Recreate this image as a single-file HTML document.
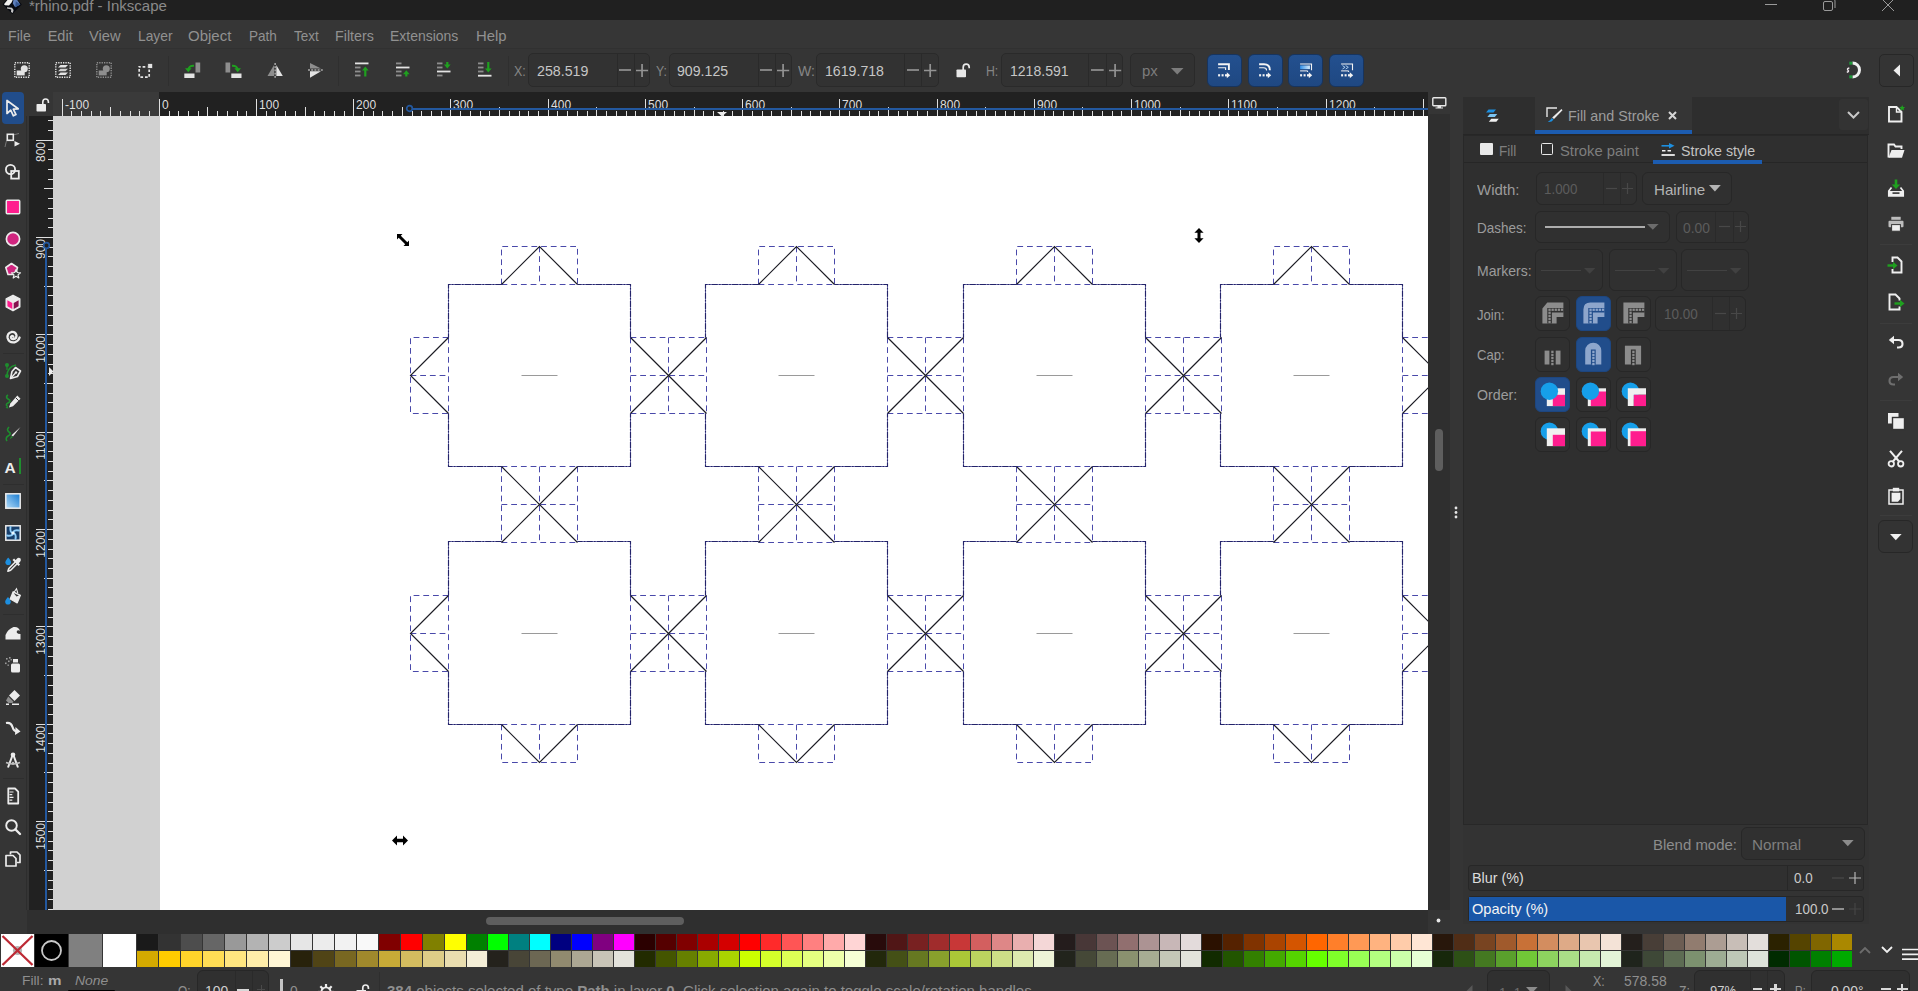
<!DOCTYPE html>
<html lang="en"><head><meta charset="utf-8"><title>*rhino.pdf - Inkscape</title>
<style>
html,body{margin:0;padding:0;background:#353535;}
body{width:1918px;height:991px;overflow:hidden;position:relative;font-family:"Liberation Sans",sans-serif;}
#app{position:absolute;left:0;top:0;width:1918px;height:991px;overflow:hidden;background:#353535;}
#app div,#app svg,#app span{position:absolute;box-sizing:border-box;}
.t{white-space:nowrap;transform-origin:0 50%;}
svg{overflow:visible;}
.palrow i{position:absolute;top:0;height:100%;display:block;}
</style></head>
<body><div id="app">
<div class="titlebar" style="left:0px;top:0px;width:1918px;height:20px;background:#202020;"></div>
<span id="t1" class="t" style="left:29.3px;top:-1px;font-size:14px;line-height:14px;color:#8a8a8a;transform:scaleX(1.0742);">*rhino.pdf - Inkscape</span>
<svg style="left:0px;top:0px;" width="24" height="16" viewBox="0 0 24 16"><path d="M2.5 4.2 L7.5 -1 H17 L21.8 4.6 L12.3 14 Z" fill="#070a10"/><path d="M4 4.3 L8.2 -1 H13.2 L11.5 2.5 L9 5.6 L5 5.2Z" fill="#f2f2f0"/><path d="M13.6 -1 H16.6 L20.3 4.5 L15.2 7.2 L12.8 3.6Z" fill="#5f80bb"/><path d="M15.8 1.2 L20.3 4.5 L15.2 7.2Z" fill="#34558f"/><path d="M7 7.3 L12 7.7 L13.6 10 L12.8 12.9 L11 12 L11.2 9.6 L7 8.6Z" fill="#c4c4c4"/></svg>
<svg style="left:1760px;top:0px;" width="150" height="14" viewBox="0 0 150 14"><path d="M5 4.5 H17" stroke="#9a9a9a" stroke-width="1"/><rect x="63.5" y="1.5" width="9" height="9" rx="1.5" fill="none" stroke="#9a9a9a"/><path d="M66 -1 H73.5 Q75 -1 75 1 V8" fill="none" stroke="#9a9a9a"/><path d="M122 -1 L134 11 M134 -1 L122 11" stroke="#9a9a9a" stroke-width="1"/></svg>
<div class="menubar" style="left:0px;top:20px;width:1918px;height:29px;background:#363636;"></div>
<span id="t2" class="t" style="left:8.3px;top:29px;font-size:14.5px;line-height:14.5px;color:#919191;transform:scaleX(0.9739);">File</span>
<span id="t3" class="t" style="left:47.7px;top:29px;font-size:14.5px;line-height:14.5px;color:#919191;transform:scaleX(1.0000);">Edit</span>
<span id="t4" class="t" style="left:89.4px;top:29px;font-size:14.5px;line-height:14.5px;color:#919191;transform:scaleX(1.0129);">View</span>
<span id="t5" class="t" style="left:137.5px;top:29px;font-size:14.5px;line-height:14.5px;color:#919191;transform:scaleX(0.9528);">Layer</span>
<span id="t6" class="t" style="left:188.2px;top:29px;font-size:14.5px;line-height:14.5px;color:#919191;transform:scaleX(1.0333);">Object</span>
<span id="t7" class="t" style="left:248.6px;top:29px;font-size:14.5px;line-height:14.5px;color:#919191;transform:scaleX(0.9333);">Path</span>
<span id="t8" class="t" style="left:293.6px;top:29px;font-size:14.5px;line-height:14.5px;color:#919191;transform:scaleX(0.9296);">Text</span>
<span id="t9" class="t" style="left:335.3px;top:29px;font-size:14.5px;line-height:14.5px;color:#919191;transform:scaleX(0.9846);">Filters</span>
<span id="t10" class="t" style="left:390.4px;top:29px;font-size:14.5px;line-height:14.5px;color:#919191;transform:scaleX(0.9634);">Extensions</span>
<span id="t11" class="t" style="left:475.5px;top:29px;font-size:14.5px;line-height:14.5px;color:#919191;transform:scaleX(1.0233);">Help</span>
<div style="left:0px;top:48px;width:1918px;height:1px;background:#313131;"></div>
<div class="toolbar" style="left:0px;top:49px;width:1918px;height:44px;background:#353535;"></div>
<svg style="left:13.5px;top:61.5px;" width="16" height="16" viewBox="0 0 16 16"><rect x="0.8" y="0.8" width="14.4" height="14.4" fill="none" stroke="#e4e4e4" stroke-width="1.4" stroke-dasharray="1.3 1.1"/><rect x="2.7" y="8.5" width="8" height="4.9" fill="#e4e4e4"/><circle cx="10.3" cy="6.8" r="3.5" fill="#e4e4e4"/></svg>
<svg style="left:54.5px;top:61.5px;" width="16" height="16" viewBox="0 0 16 16"><rect x="0.8" y="0.8" width="14.4" height="14.4" fill="none" stroke="#e4e4e4" stroke-width="1.4" stroke-dasharray="1.3 1.1"/><path d="M5.5 3 H13 L10.5 5.6 H3Z" fill="#e4e4e4"/><path d="M5.5 6.7 H13 L10.5 9.3 H3Z" fill="#d0d0d0"/><path d="M5.5 10.4 H13 L10.5 13.0 H3Z" fill="#e4e4e4"/></svg>
<svg style="left:95.7px;top:61.5px;" width="16" height="16" viewBox="0 0 16 16"><rect x="0.8" y="0.8" width="14.4" height="14.4" fill="none" stroke="#8e8e8e" stroke-width="1.4" stroke-dasharray="1.3 1.1"/><rect x="2.7" y="8.5" width="8" height="4.9" fill="#8e8e8e"/><circle cx="10.3" cy="6.8" r="3.5" fill="#8e8e8e"/></svg>
<svg style="left:137.5px;top:61.5px;" width="16" height="16" viewBox="0 0 16 16"><rect x="1.2" y="4.8" width="10" height="10.3" fill="none" stroke="#e4e4e4" stroke-width="1.7" stroke-dasharray="2.7 1.9" stroke-dashoffset="1.2"/><rect x="9.7" y="1.4" width="5" height="5" fill="#e4e4e4" stroke="#353535" stroke-width="0.8"/></svg>
<div style="left:168px;top:56px;width:1px;height:30px;background:#2f2f2f;"></div>
<svg style="left:183.5px;top:61.5px;" width="17" height="16" viewBox="0 0 17 16"><rect x="11.5" y="0.5" width="4.7" height="10" fill="#8e8e8e"/><rect x="0.3" y="11.5" width="10.2" height="4.5" fill="#e4e4e4"/><path d="M10 3.8 Q4.5 3.5 4.3 8" fill="none" stroke="#1fa01f" stroke-width="2"/><path d="M1 6.3 L7.6 6.3 L4.3 10.2Z" fill="#1fa01f"/></svg>
<svg style="left:224.5px;top:61.5px;" width="17" height="16" viewBox="0 0 17 16"><rect x="0.5" y="0.5" width="4.7" height="10" fill="#8e8e8e"/><rect x="6.3" y="11.5" width="10.2" height="4.5" fill="#e4e4e4"/><path d="M7 3.8 Q12.5 3.5 12.7 8" fill="none" stroke="#1fa01f" stroke-width="2"/><path d="M16 6.3 L9.4 6.3 L12.7 10.2Z" fill="#1fa01f"/></svg>
<svg style="left:266.5px;top:61.5px;" width="16" height="16" viewBox="0 0 16 16"><path d="M7 3 V14 H0.5Z" fill="#8e8e8e"/><path d="M9.3 3 V14 H15.8Z" fill="#e4e4e4"/><path d="M8.1 1 V16" stroke="#e4e4e4" stroke-width="1" stroke-dasharray="2 1.2"/></svg>
<svg style="left:308px;top:61.5px;" width="16" height="16" viewBox="0 0 16 16"><path d="M2 6.5 H13 L2 1Z" fill="#8e8e8e"/><path d="M2 9.3 H13 L2 15.8Z" fill="#e4e4e4"/><path d="M0 8 H15" stroke="#e4e4e4" stroke-width="1" stroke-dasharray="2 1.2"/></svg>
<div style="left:338px;top:56px;width:1px;height:30px;background:#2f2f2f;"></div>
<svg style="left:354.5px;top:62px;" width="14" height="15" viewBox="0 0 14 15"><rect x="0" y="0.5" width="13.5" height="1.8" fill="#e4e4e4"/><rect x="0" y="4.6" width="5.5" height="1.8" fill="#8e8e8e"/><rect x="0" y="8.6" width="5.5" height="1.8" fill="#8e8e8e"/><rect x="0" y="12.6" width="5.5" height="1.8" fill="#8e8e8e"/><path d="M10.3 7.5 V14.5" stroke="#1fa01f" stroke-width="2.2"/><path d="M7.000000000000001 8.5 L10.3 4.5 L13.600000000000001 8.5Z" fill="#1fa01f"/></svg>
<svg style="left:395.8px;top:62px;" width="14" height="15" viewBox="0 0 14 15"><rect x="0" y="0.5" width="5.5" height="1.8" fill="#8e8e8e"/><rect x="0" y="4.6" width="13.5" height="1.8" fill="#e4e4e4"/><rect x="0" y="8.6" width="5.5" height="1.8" fill="#8e8e8e"/><rect x="0" y="12.6" width="5.5" height="1.8" fill="#8e8e8e"/><path d="M10.3 11.2 V14.5" stroke="#1fa01f" stroke-width="2.2"/><path d="M7.000000000000001 12.2 L10.3 8.2 L13.600000000000001 12.2Z" fill="#1fa01f"/></svg>
<svg style="left:436.8px;top:62px;" width="14" height="15" viewBox="0 0 14 15"><rect x="0" y="0.5" width="5.5" height="1.8" fill="#8e8e8e"/><rect x="0" y="4.6" width="5.5" height="1.8" fill="#8e8e8e"/><rect x="0" y="8.6" width="13.5" height="1.8" fill="#e4e4e4"/><rect x="0" y="12.6" width="5.5" height="1.8" fill="#8e8e8e"/><path d="M10.3 0 V3.5" stroke="#1fa01f" stroke-width="2.2"/><path d="M7.000000000000001 2.5 L10.3 6.5 L13.600000000000001 2.5Z" fill="#1fa01f"/></svg>
<svg style="left:478px;top:62px;" width="14" height="15" viewBox="0 0 14 15"><rect x="0" y="0.5" width="5.5" height="1.8" fill="#8e8e8e"/><rect x="0" y="4.6" width="5.5" height="1.8" fill="#8e8e8e"/><rect x="0" y="8.6" width="5.5" height="1.8" fill="#8e8e8e"/><rect x="0" y="12.8" width="13.5" height="1.8" fill="#e4e4e4"/><path d="M10.3 0 V7.5" stroke="#1fa01f" stroke-width="2.2"/><path d="M7.000000000000001 6.5 L10.3 10.5 L13.600000000000001 6.5Z" fill="#1fa01f"/></svg>
<div style="left:508px;top:56px;width:1px;height:30px;background:#2f2f2f;"></div>
<span id="t12" class="t" style="left:514px;top:64px;font-size:14.5px;line-height:14.5px;color:#858585;transform:scaleX(0.8571);">X:</span>
<div style="left:528.3px;top:53.4px;width:122.20000000000005px;height:33.6px;background:#323232;border:1px solid #2a2a2a;border-radius:5px;"></div>
<div style="left:616.6px;top:54.4px;width:1px;height:31.6px;background:#2a2a2a;"></div>
<div style="left:633.8px;top:54.4px;width:1px;height:31.6px;background:#2a2a2a;"></div>
<span id="t13" class="t" style="left:536.5px;top:64px;font-size:14.5px;line-height:14.5px;color:#c6c6c6;transform:scaleX(0.9808);">258.519</span>
<svg style="left:619px;top:64.2px;" width="12" height="12" viewBox="0 0 12 12"><path d="M0 6 H12" stroke="#939393" stroke-width="1.7"/></svg>
<svg style="left:636.4px;top:63.7px;" width="12.100000000000023" height="13" viewBox="0 0 12.100000000000023 13"><path d="M0 6.5 H12.100000000000023 M6.050000000000011 0 V13" stroke="#939393" stroke-width="1.7"/></svg>
<span id="t14" class="t" style="left:656px;top:64px;font-size:14.5px;line-height:14.5px;color:#858585;transform:scaleX(0.8462);">Y:</span>
<div style="left:669.4px;top:53.4px;width:122.39999999999998px;height:33.6px;background:#323232;border:1px solid #2a2a2a;border-radius:5px;"></div>
<div style="left:757.5px;top:54.4px;width:1px;height:31.6px;background:#2a2a2a;"></div>
<div style="left:774.5px;top:54.4px;width:1px;height:31.6px;background:#2a2a2a;"></div>
<span id="t15" class="t" style="left:676.7px;top:64px;font-size:14.5px;line-height:14.5px;color:#c6c6c6;transform:scaleX(0.9750);">909.125</span>
<svg style="left:760px;top:64.2px;" width="12" height="12" viewBox="0 0 12 12"><path d="M0 6 H12" stroke="#939393" stroke-width="1.7"/></svg>
<svg style="left:776.8px;top:63.7px;" width="12.200000000000045" height="13" viewBox="0 0 12.200000000000045 13"><path d="M0 6.5 H12.200000000000045 M6.100000000000023 0 V13" stroke="#939393" stroke-width="1.7"/></svg>
<span id="t16" class="t" style="left:797.5px;top:64px;font-size:14.5px;line-height:14.5px;color:#858585;transform:scaleX(0.9706);">W:</span>
<div style="left:816.2px;top:53.4px;width:122.39999999999998px;height:33.6px;background:#323232;border:1px solid #2a2a2a;border-radius:5px;"></div>
<div style="left:904.3px;top:54.4px;width:1px;height:31.6px;background:#2a2a2a;"></div>
<div style="left:921.3px;top:54.4px;width:1px;height:31.6px;background:#2a2a2a;"></div>
<span id="t17" class="t" style="left:824.5px;top:64px;font-size:14.5px;line-height:14.5px;color:#c6c6c6;transform:scaleX(0.9750);">1619.718</span>
<svg style="left:907px;top:64.2px;" width="12" height="12" viewBox="0 0 12 12"><path d="M0 6 H12" stroke="#939393" stroke-width="1.7"/></svg>
<svg style="left:923.6px;top:63.7px;" width="12.399999999999977" height="13" viewBox="0 0 12.399999999999977 13"><path d="M0 6.5 H12.399999999999977 M6.199999999999989 0 V13" stroke="#939393" stroke-width="1.7"/></svg>
<svg style="left:956px;top:63px;" width="15" height="15" viewBox="0 0 15 15"><rect x="0.5" y="6.5" width="9.5" height="7.8" rx="0.8" fill="#e8e8e8"/><path d="M7.2 7 V4.2 Q7.2 1.2 10.2 1.2 Q13.2 1.2 13.2 4.2 V5.2" fill="none" stroke="#e8e8e8" stroke-width="1.7"/></svg>
<span id="t18" class="t" style="left:986px;top:64px;font-size:14.5px;line-height:14.5px;color:#858585;transform:scaleX(0.8467);">H:</span>
<div style="left:1001.4px;top:53.4px;width:121.80000000000007px;height:33.6px;background:#323232;border:1px solid #2a2a2a;border-radius:5px;"></div>
<div style="left:1088.3px;top:54.4px;width:1px;height:31.6px;background:#2a2a2a;"></div>
<div style="left:1105.5px;top:54.4px;width:1px;height:31.6px;background:#2a2a2a;"></div>
<span id="t19" class="t" style="left:1009.7px;top:64px;font-size:14.5px;line-height:14.5px;color:#c6c6c6;transform:scaleX(0.9683);">1218.591</span>
<svg style="left:1091px;top:64.2px;" width="12.700000000000045" height="12" viewBox="0 0 12.700000000000045 12"><path d="M0 6 H12.700000000000045" stroke="#939393" stroke-width="1.7"/></svg>
<svg style="left:1108.8px;top:63.7px;" width="12.200000000000045" height="13" viewBox="0 0 12.200000000000045 13"><path d="M0 6.5 H12.200000000000045 M6.100000000000023 0 V13" stroke="#939393" stroke-width="1.7"/></svg>
<div style="left:1129.5px;top:53.4px;width:65px;height:33.6px;background:#323232;border:1px solid #2a2a2a;border-radius:5px;"></div>
<span id="t20" class="t" style="left:1141.5px;top:64px;font-size:14.5px;line-height:14.5px;color:#7c7c7c;transform:scaleX(1.0333);">px</span>
<svg style="left:1170.5px;top:67.5px;" width="13" height="7" viewBox="0 0 13 7"><path d="M0 0 H12.5 L6.25 6.5Z" fill="#7c7c7c"/></svg>
<div style="left:1206.8px;top:53.5px;width:35px;height:33.5px;border:1px solid #17345e;border-radius:6px;background:linear-gradient(#23508f,#1f4882);"></div>
<div style="left:1247.8px;top:53.5px;width:35px;height:33.5px;border:1px solid #17345e;border-radius:6px;background:linear-gradient(#23508f,#1f4882);"></div>
<div style="left:1288.4px;top:53.5px;width:35px;height:33.5px;border:1px solid #17345e;border-radius:6px;background:linear-gradient(#23508f,#1f4882);"></div>
<div style="left:1329.4px;top:53.5px;width:35px;height:33.5px;border:1px solid #17345e;border-radius:6px;background:linear-gradient(#23508f,#1f4882);"></div>
<svg style="left:1206.8px;top:53.5px;" width="35" height="34" viewBox="0 0 35 34"><path d="M11.1 10.3 H21.9 V16" fill="none" stroke="#f4f4f4" stroke-width="1.9"/><path d="M11.1 13.8 H18.6 V16" fill="none" stroke="#f4f4f4" stroke-width="1.1"/><rect x="11.1" y="20.2" width="2" height="2.2" fill="#f4f4f4"/><rect x="14.6" y="20.2" width="2" height="2.2" fill="#f4f4f4"/><rect x="18" y="20.2" width="2.5" height="2.2" fill="#f4f4f4"/><path d="M19.8 18.3 L23.2 21.3 L19.8 24.3Z" fill="#f4f4f4"/></svg>
<svg style="left:1247.8px;top:53.5px;" width="35" height="34" viewBox="0 0 35 34"><path d="M11.1 10.3 H16 Q21.9 10.3 21.9 16.2" fill="none" stroke="#f4f4f4" stroke-width="1.9"/><path d="M11.1 13.8 H15.5 Q18.6 13.8 18.6 16.5" fill="none" stroke="#f4f4f4" stroke-width="1.1"/><rect x="11.1" y="20.2" width="2" height="2.2" fill="#f4f4f4"/><rect x="14.6" y="20.2" width="2" height="2.2" fill="#f4f4f4"/><rect x="18" y="20.2" width="2.5" height="2.2" fill="#f4f4f4"/><path d="M19.8 18.3 L23.2 21.3 L19.8 24.3Z" fill="#f4f4f4"/></svg>
<svg style="left:1289.2px;top:53.5px;" width="35" height="34" viewBox="0 0 35 34"><defs><linearGradient id="bg3" x1="0" x2="1" y1="0" y2="0"><stop offset="0" stop-color="#2f8fe8"/><stop offset="1" stop-color="#d8ecfc"/></linearGradient></defs><path d="M11.1 10 H22.5 V16.2" fill="none" stroke="#f4f4f4" stroke-width="1.1"/><rect x="11.1" y="11.5" width="9.8" height="3.6" fill="url(#bg3)"/><path d="M11.1 16.9 H18.6 V18" fill="none" stroke="#f4f4f4" stroke-width="1"/><rect x="11.1" y="20.2" width="2" height="2.2" fill="#f4f4f4"/><rect x="14.6" y="20.2" width="2" height="2.2" fill="#f4f4f4"/><rect x="18" y="20.2" width="2.5" height="2.2" fill="#f4f4f4"/><path d="M19.8 18.3 L23.2 21.3 L19.8 24.3Z" fill="#f4f4f4"/></svg>
<svg style="left:1330.2px;top:53.5px;" width="35" height="34" viewBox="0 0 35 34"><path d="M11.1 10 H22.5 V16.2" fill="none" stroke="#f4f4f4" stroke-width="1.1"/><path d="M12.5 11.6 l2.6 1.7 l-2.6 1.7 M15.7 11.6 l2.6 1.7 l-2.6 1.7" fill="none" stroke="#b9d8f6" stroke-width="0.9"/><path d="M11.1 16.9 H18.6 V18" fill="none" stroke="#f4f4f4" stroke-width="1"/><rect x="11.1" y="20.2" width="2" height="2.2" fill="#f4f4f4"/><rect x="14.6" y="20.2" width="2" height="2.2" fill="#f4f4f4"/><rect x="18" y="20.2" width="2.5" height="2.2" fill="#f4f4f4"/><path d="M19.8 18.3 L23.2 21.3 L19.8 24.3Z" fill="#f4f4f4"/></svg>
<svg style="left:1845px;top:61px;" width="18" height="18" viewBox="0 0 18 18"><path d="M7.5 2 A7 7 0 1 1 7.5 16" fill="none" stroke="#efefef" stroke-width="3"/><rect x="4.3" y="0.7" width="3" height="3" fill="#1f9a3a"/><rect x="4.3" y="14.3" width="3" height="3" fill="#1f9a3a"/><path d="M4.3 7 Q1.5 7.5 3 9.2 Q4.5 10.5 1.8 11.2" fill="none" stroke="#f0e8ee" stroke-width="1.4"/></svg>
<div style="left:1878.6px;top:53.6px;width:35px;height:33px;background:#343434;border:1px solid #272727;border-radius:5px;"></div>
<svg style="left:1892.5px;top:63.5px;" width="8" height="13" viewBox="0 0 8 13"><path d="M7 0.5 V12.5 L0.5 6.5Z" fill="#eeeeee"/></svg>
<div class="toolbox" style="left:0px;top:93px;width:30px;height:841px;background:#353535;"></div>
<div style="left:26px;top:116px;width:1px;height:818px;background:#2d2d2d;"></div>
<div style="left:2px;top:92.3px;width:22.3px;height:31.5px;background:#214d8b;border-radius:4px;"></div>
<svg style="left:4.0px;top:99.0px;" width="18" height="18" viewBox="0 0 18 18"><path d="M3 1.5 L3 14.5 L6.7 11.2 L9.4 16.8 L12 15.6 L9.3 10.2 L14.2 9.8 Z" fill="#214d8b" stroke="#ececec" stroke-width="1.7" stroke-linejoin="round"/></svg>
<svg style="left:4.0px;top:131.0px;" width="18" height="18" viewBox="0 0 18 18"><path d="M1 16 Q2 4 15 2.5" fill="none" stroke="#777" stroke-width="1"/><rect x="3.3" y="3.3" width="6" height="6" fill="#353535" stroke="#ececec" stroke-width="1.6"/><path d="M10.5 10 L16 12.7 L10.5 15.5Z" fill="#ececec"/></svg>
<svg style="left:4.0px;top:163.0px;" width="18" height="18" viewBox="0 0 18 18"><circle cx="6.5" cy="6.5" r="4.6" fill="none" stroke="#ececec" stroke-width="1.8"/><rect x="7.2" y="8" width="7.6" height="7.6" fill="none" stroke="#ececec" stroke-width="1.8"/></svg>
<svg style="left:4.0px;top:198.0px;" width="18" height="18" viewBox="0 0 18 18"><rect x="2.3" y="2.3" width="13.4" height="13.4" rx="1" fill="#ff1d8e" stroke="#ececec" stroke-width="1.5"/></svg>
<svg style="left:4.0px;top:230.0px;" width="18" height="18" viewBox="0 0 18 18"><circle cx="9" cy="9" r="6.6" fill="#d0257f" stroke="#ececec" stroke-width="1.7"/></svg>
<svg style="left:4.0px;top:262.0px;" width="18" height="18" viewBox="0 0 18 18"><path d="M7.5 1.5 L13.5 5.5 L11.5 12.5 L4 12.5 L1.8 5.5Z" fill="#d0257f" stroke="#ececec" stroke-width="1.6" stroke-linejoin="round"/><path d="M12 7.5 L13.3 10.5 L16.5 10.8 L14 12.9 L14.8 16 L12 14.3 L9.2 16 L10 12.9 L7.5 10.8 L10.7 10.5Z" fill="#353535" stroke="#ececec" stroke-width="1.2" stroke-linejoin="round"/></svg>
<svg style="left:4.0px;top:294.0px;" width="18" height="18" viewBox="0 0 18 18"><path d="M9 1.3 L15.8 4.9 V13 L9 16.7 L2.2 13 V4.9Z" fill="#ececec" stroke="#ececec" stroke-width="1.4" stroke-linejoin="round"/><path d="M3.4 6.3 L8.3 9 V15 L3.4 12.3Z" fill="#ff1d8e"/><path d="M14.6 6.3 L9.7 9 V15 L14.6 12.3Z" fill="#86124f"/></svg>
<svg style="left:4.0px;top:327.0px;" width="18" height="18" viewBox="0 0 18 18"><path d="M9.3 9.6 Q8 8.3 7 9.8 Q6.5 12 9.3 12.2 Q12.8 11.8 12.5 8.3 Q11.5 4.6 7.5 5 Q3 6.2 3.6 11 Q5 16 10.5 15.3 Q14.5 14.3 15.6 10.5" fill="none" stroke="#ececec" stroke-width="2.3" stroke-linecap="round"/></svg>
<div style="left:3px;top:353px;width:21px;height:1px;background:#2e2e2e;"></div>
<svg style="left:4.0px;top:362.0px;" width="18" height="18" viewBox="0 0 18 18"><circle cx="3" cy="3" r="2" fill="#1e8e2e"/><circle cx="3" cy="14" r="2" fill="#1e8e2e"/><path d="M3 14 Q3 5 12 3" fill="none" stroke="#1e8e2e" stroke-width="1.4"/><path d="M3 3 L3 8" stroke="#1e8e2e" stroke-width="1.2"/><path d="M11.5 5.5 L16.5 9 L13.5 14.5 L6.5 16.5 L8 9.5Z" fill="none" stroke="#ececec" stroke-width="1.6" stroke-linejoin="round"/><path d="M7 16 L11.5 11" stroke="#ececec" stroke-width="1.3"/><circle cx="12" cy="10.5" r="1.2" fill="#ececec"/></svg>
<svg style="left:4.0px;top:393.0px;" width="18" height="18" viewBox="0 0 18 18"><path d="M4 2 Q1 4 4 6 Q8 8 4 10 Q1 11.5 3.5 13.5" fill="none" stroke="#1e8e2e" stroke-width="1.6"/><path d="M13.3 2.5 L16.5 5.7 L9 13.2 L5 14.5 L6.3 10.5Z" fill="#ececec"/><path d="M11.8 4.8 L14.8 7.8" stroke="#353535" stroke-width="1"/><path d="M1.5 15 l2 -2 l1 2.5z" fill="#1e8e2e"/></svg>
<svg style="left:4.0px;top:425.0px;" width="18" height="18" viewBox="0 0 18 18"><path d="M5 2 Q2 5 5 7 Q8 9 4 11 Q1 13 3 16" fill="none" stroke="#1e8e2e" stroke-width="1.6"/><path d="M16.5 2 L9 11.5 L7.5 10.2Z" fill="#ececec"/><path d="M7.5 10.8 L9 12 L5.5 14.5Z" fill="#1e8e2e"/></svg>
<span class="t" style="left:4.6px;top:460px;font-size:15.5px;line-height:15.5px;font-weight:bold;color:#ececec;">A</span>
<div style="left:18.5px;top:458px;width:2px;height:15.5px;background:#1e8e2e;"></div>
<div style="left:3px;top:483.5px;width:21px;height:1px;background:#2e2e2e;"></div>
<svg style="left:4.0px;top:492.0px;" width="18" height="18" viewBox="0 0 18 18"><defs><linearGradient id="gg" x1="1" y1="0" x2="0" y2="1"><stop offset="0" stop-color="#1479d0"/><stop offset="1" stop-color="#b4dcf8"/></linearGradient></defs><rect x="1.8" y="1.8" width="14.4" height="14.4" fill="url(#gg)" stroke="#ececec" stroke-width="1.5"/></svg>
<svg style="left:4.0px;top:524.0px;" width="18" height="18" viewBox="0 0 18 18"><rect x="1.8" y="1.8" width="14.4" height="14.4" fill="#173f6c" stroke="#ececec" stroke-width="1.5"/><g fill="none" stroke="#8fcdf8" stroke-width="1.9" stroke-linecap="round"><path d="M9 9 Q5.5 8.5 6.5 3"/><path d="M9 9 Q9.5 5.5 15 6.5"/><path d="M9 9 Q12.5 9.5 11.5 15"/><path d="M9 9 Q8.5 12.5 3 11.5"/></g><circle cx="9" cy="9" r="1.6" fill="#e8f6ff"/></svg>
<svg style="left:4.0px;top:556.0px;" width="18" height="18" viewBox="0 0 18 18"><path d="M4.2 1.6 C4.2 1.6 1.4 4.8 1.4 6.3 A2.8 2.8 0 0 0 7 6.3 C7 4.8 4.2 1.6 4.2 1.6Z" fill="#1d8fe0"/><path d="M12.4 3.2 Q14.6 0.8 16.3 2.6 Q17.8 4.4 15.5 6.4 L14 7.6 L11.2 4.6Z" fill="#ececec"/><path d="M11.3 6 L4.8 12.5 L3.9 15.2 L6.6 14.3 L13.1 7.8" fill="#353535" stroke="#ececec" stroke-width="1.6" stroke-linejoin="round"/><path d="M9.3 3.3 L15.3 9.3" stroke="#ececec" stroke-width="2.2"/></svg>
<svg style="left:4.0px;top:588.0px;" width="18" height="18" viewBox="0 0 18 18"><path d="M4 9 C4 9 1.2 12.2 1.2 13.7 A2.8 2.8 0 0 0 6.8 13.7 C6.8 12.2 4 9 4 9Z" fill="#1d8fe0"/><path d="M9.2 3.8 L16.3 7.3 L13.2 14.8 L6.3 11Z" fill="#ececec" stroke="#ececec" stroke-width="1.4" stroke-linejoin="round"/><path d="M9.6 5 L15 7.6 L12.5 8.6Z" fill="#353535"/><path d="M8.5 6.5 L12.5 0.8 L13.8 5" fill="none" stroke="#ececec" stroke-width="1.1"/></svg>
<div style="left:3px;top:613.5px;width:21px;height:1px;background:#2e2e2e;"></div>
<svg style="left:4.0px;top:623.5px;" width="18" height="18" viewBox="0 0 18 18"><path d="M1.5 15.5 V11 Q3.5 5.5 9.5 3 Q14.5 2.2 16 6.8 Q14 5.6 12.8 7 Q12.2 9 14.2 9.8 L16.5 10 V15.5Z" fill="#ececec"/></svg>
<svg style="left:4.0px;top:656.0px;" width="18" height="18" viewBox="0 0 18 18"><rect x="7" y="7.5" width="9" height="9" rx="1.5" fill="#ececec"/><rect x="9" y="3" width="5" height="3.5" fill="#ececec"/><g fill="#9a9a9a"><rect x="2" y="2" width="1.6" height="1.6"/><rect x="5" y="1" width="1.6" height="1.6"/><rect x="4" y="4.5" width="1.6" height="1.6"/><rect x="1" y="6.5" width="1.6" height="1.6"/><rect x="6.5" y="3" width="1.4" height="1.4"/><rect x="3.5" y="8.5" width="1.4" height="1.4"/></g></svg>
<svg style="left:4.0px;top:688.0px;" width="18" height="18" viewBox="0 0 18 18"><path d="M10.5 2 L16 7.5 L10.5 13 L5 7.5Z" fill="#ececec"/><path d="M4.3 8.5 L9.5 13.7 L8.3 15 L4.5 15 L2 12.5Z" fill="#8e8e8e"/><path d="M2 16.2 H5 M8 16.2 H15" stroke="#ececec" stroke-width="1.6"/></svg>
<svg style="left:4.0px;top:719.0px;" width="18" height="18" viewBox="0 0 18 18"><path d="M2 4 Q7 3 8.5 8 Q10 13 14 12.5" fill="none" stroke="#ececec" stroke-width="2.2"/><path d="M11.5 8 L16.5 12.5 L11 16Z" fill="#ececec"/></svg>
<svg style="left:4.0px;top:751.0px;" width="18" height="18" viewBox="0 0 18 18"><path d="M9 3 L4 16.5 M9 3 L14 16.5" stroke="#ececec" stroke-width="2" fill="none"/><circle cx="9" cy="3.8" r="2.3" fill="#ececec"/><path d="M2 11.5 Q9 14.5 16 11.5" fill="none" stroke="#bdbdbd" stroke-width="1.5"/><circle cx="9" cy="12.3" r="1.5" fill="#bdbdbd"/></svg>
<div style="left:3px;top:777.5px;width:21px;height:1px;background:#2e2e2e;"></div>
<svg style="left:4.0px;top:786.5px;" width="18" height="18" viewBox="0 0 18 18"><path d="M4.3 1.5 H11 L14.2 4.7 V16.5 H4.3Z" fill="none" stroke="#ececec" stroke-width="1.8" stroke-linejoin="round"/><path d="M5.5 5 H9.5 M5.5 7.7 H8.3 M5.5 10.4 H9.5 M5.5 13.1 H8.3" stroke="#ececec" stroke-width="1.2"/></svg>
<svg style="left:4.0px;top:818.0px;" width="18" height="18" viewBox="0 0 18 18"><circle cx="7.5" cy="7.5" r="5.3" fill="none" stroke="#ececec" stroke-width="1.9"/><path d="M11.5 11.5 L16 16" stroke="#ececec" stroke-width="2.4" stroke-linecap="round"/></svg>
<svg style="left:4.0px;top:850.0px;" width="18" height="18" viewBox="0 0 18 18"><path d="M6.5 4.5 V2 H13 L16 5 V12.5 H13" fill="none" stroke="#ececec" stroke-width="1.7" stroke-linejoin="round"/><path d="M2 5.5 H9 L12 8.5 V16 H2Z" fill="none" stroke="#ececec" stroke-width="1.7" stroke-linejoin="round"/></svg>
<div class="hruler" style="left:53px;top:92px;width:1375px;height:24px;background:#3a3a3a;"></div>
<div style="left:159px;top:92px;width:1269px;height:24px;background:#212121;"></div>
<div class="vruler" style="left:29px;top:116px;width:24px;height:794px;background:#212121;"></div>
<svg style="left:0px;top:0px;pointer-events:none;" width="1918" height="991" viewBox="0 0 1918 991"><path d="M62.5 99 V116 M71.5 111 V116 M81.5 111 V116 M91.5 111 V116 M100.5 111 V116 M110.5 107 V116 M120.5 111 V116 M130.5 111 V116 M139.5 111 V116 M149.5 111 V116 M159.5 99 V116 M169.5 111 V116 M178.5 111 V116 M188.5 111 V116 M198.5 111 V116 M207.5 107 V116 M217.5 111 V116 M227.5 111 V116 M237.5 111 V116 M246.5 111 V116 M256.5 99 V116 M266.5 111 V116 M275.5 111 V116 M285.5 111 V116 M295.5 111 V116 M305.5 107 V116 M314.5 111 V116 M324.5 111 V116 M334.5 111 V116 M344.5 111 V116 M353.5 99 V116 M363.5 111 V116 M373.5 111 V116 M382.5 111 V116 M392.5 111 V116 M402.5 107 V116 M412.5 111 V116 M421.5 111 V116 M431.5 111 V116 M441.5 111 V116 M450.5 99 V116 M460.5 111 V116 M470.5 111 V116 M480.5 111 V116 M489.5 111 V116 M499.5 107 V116 M509.5 111 V116 M519.5 111 V116 M528.5 111 V116 M538.5 111 V116 M548.5 99 V116 M557.5 111 V116 M567.5 111 V116 M577.5 111 V116 M587.5 111 V116 M596.5 107 V116 M606.5 111 V116 M616.5 111 V116 M626.5 111 V116 M635.5 111 V116 M645.5 99 V116 M655.5 111 V116 M664.5 111 V116 M674.5 111 V116 M684.5 111 V116 M694.5 107 V116 M703.5 111 V116 M713.5 111 V116 M723.5 111 V116 M732.5 111 V116 M742.5 99 V116 M752.5 111 V116 M762.5 111 V116 M771.5 111 V116 M781.5 111 V116 M791.5 107 V116 M801.5 111 V116 M810.5 111 V116 M820.5 111 V116 M830.5 111 V116 M839.5 99 V116 M849.5 111 V116 M859.5 111 V116 M869.5 111 V116 M878.5 111 V116 M888.5 107 V116 M898.5 111 V116 M907.5 111 V116 M917.5 111 V116 M927.5 111 V116 M937.5 99 V116 M946.5 111 V116 M956.5 111 V116 M966.5 111 V116 M976.5 111 V116 M985.5 107 V116 M995.5 111 V116 M1005.5 111 V116 M1014.5 111 V116 M1024.5 111 V116 M1034.5 99 V116 M1044.5 111 V116 M1053.5 111 V116 M1063.5 111 V116 M1073.5 111 V116 M1082.5 107 V116 M1092.5 111 V116 M1102.5 111 V116 M1112.5 111 V116 M1121.5 111 V116 M1131.5 99 V116 M1141.5 111 V116 M1151.5 111 V116 M1160.5 111 V116 M1170.5 111 V116 M1180.5 107 V116 M1189.5 111 V116 M1199.5 111 V116 M1209.5 111 V116 M1219.5 111 V116 M1228.5 99 V116 M1238.5 111 V116 M1248.5 111 V116 M1257.5 111 V116 M1267.5 111 V116 M1277.5 107 V116 M1287.5 111 V116 M1296.5 111 V116 M1306.5 111 V116 M1316.5 111 V116 M1326.5 99 V116 M1335.5 111 V116 M1345.5 111 V116 M1355.5 111 V116 M1364.5 111 V116 M1374.5 107 V116 M1384.5 111 V116 M1394.5 111 V116 M1403.5 111 V116 M1413.5 111 V116 M1423.5 99 V116" stroke="#e0e0e0" stroke-width="1" fill="none" shape-rendering="crispEdges"/></svg>
<span id="t21" class="t" style="left:65.1px;top:99px;font-size:12px;line-height:12px;color:#dedede;">-100</span>
<span id="t22" class="t" style="left:162.1px;top:99px;font-size:12px;line-height:12px;color:#dedede;">0</span>
<span id="t23" class="t" style="left:259.1px;top:99px;font-size:12px;line-height:12px;color:#dedede;">100</span>
<span id="t24" class="t" style="left:356.1px;top:99px;font-size:12px;line-height:12px;color:#dedede;">200</span>
<span id="t25" class="t" style="left:453.1px;top:99px;font-size:12px;line-height:12px;color:#dedede;">300</span>
<span id="t26" class="t" style="left:551.1px;top:99px;font-size:12px;line-height:12px;color:#dedede;">400</span>
<span id="t27" class="t" style="left:648.1px;top:99px;font-size:12px;line-height:12px;color:#dedede;">500</span>
<span id="t28" class="t" style="left:745.1px;top:99px;font-size:12px;line-height:12px;color:#dedede;">600</span>
<span id="t29" class="t" style="left:842.1px;top:99px;font-size:12px;line-height:12px;color:#dedede;">700</span>
<span id="t30" class="t" style="left:940.1px;top:99px;font-size:12px;line-height:12px;color:#dedede;">800</span>
<span id="t31" class="t" style="left:1037.1px;top:99px;font-size:12px;line-height:12px;color:#dedede;">900</span>
<span id="t32" class="t" style="left:1134.1px;top:99px;font-size:12px;line-height:12px;color:#dedede;">1000</span>
<span id="t33" class="t" style="left:1231.1px;top:99px;font-size:12px;line-height:12px;color:#dedede;">1100</span>
<span id="t34" class="t" style="left:1329.1px;top:99px;font-size:12px;line-height:12px;color:#dedede;">1200</span>
<svg style="left:0px;top:0px;pointer-events:none;" width="1918" height="991" viewBox="0 0 1918 991"><path d="M48 120.5 H53 M48 130.5 H53 M36 140.5 H53 M48 149.5 H53 M48 159.5 H53 M48 169.5 H53 M48 179.5 H53 M44 188.5 H53 M48 198.5 H53 M48 208.5 H53 M48 218.5 H53 M48 227.5 H53 M36 237.5 H53 M48 247.5 H53 M48 256.5 H53 M48 266.5 H53 M48 276.5 H53 M44 286.5 H53 M48 295.5 H53 M48 305.5 H53 M48 315.5 H53 M48 325.5 H53 M36 334.5 H53 M48 344.5 H53 M48 354.5 H53 M48 364.5 H53 M48 373.5 H53 M44 383.5 H53 M48 393.5 H53 M48 402.5 H53 M48 412.5 H53 M48 422.5 H53 M36 432.5 H53 M48 441.5 H53 M48 451.5 H53 M48 461.5 H53 M48 471.5 H53 M44 480.5 H53 M48 490.5 H53 M48 500.5 H53 M48 510.5 H53 M48 519.5 H53 M36 529.5 H53 M48 539.5 H53 M48 549.5 H53 M48 558.5 H53 M48 568.5 H53 M44 578.5 H53 M48 587.5 H53 M48 597.5 H53 M48 607.5 H53 M48 617.5 H53 M36 626.5 H53 M48 636.5 H53 M48 646.5 H53 M48 656.5 H53 M48 665.5 H53 M44 675.5 H53 M48 685.5 H53 M48 695.5 H53 M48 704.5 H53 M48 714.5 H53 M36 724.5 H53 M48 733.5 H53 M48 743.5 H53 M48 753.5 H53 M48 763.5 H53 M44 772.5 H53 M48 782.5 H53 M48 792.5 H53 M48 802.5 H53 M48 811.5 H53 M36 821.5 H53 M48 831.5 H53 M48 841.5 H53 M48 850.5 H53 M48 860.5 H53 M44 870.5 H53 M48 880.5 H53 M48 889.5 H53 M48 899.5 H53 M48 909.5 H53" stroke="#e0e0e0" stroke-width="1" fill="none" shape-rendering="crispEdges"/></svg>
<span class="t" style="left:47px;top:142.3px;font-size:12px;line-height:12px;color:#dedede;transform-origin:0 0;transform:rotate(-90deg) translate(-100%,-100%);">800</span>
<span class="t" style="left:47px;top:239.3px;font-size:12px;line-height:12px;color:#dedede;transform-origin:0 0;transform:rotate(-90deg) translate(-100%,-100%);">900</span>
<span class="t" style="left:47px;top:336.3px;font-size:12px;line-height:12px;color:#dedede;transform-origin:0 0;transform:rotate(-90deg) translate(-100%,-100%);">1000</span>
<span class="t" style="left:47px;top:434.3px;font-size:12px;line-height:12px;color:#dedede;transform-origin:0 0;transform:rotate(-90deg) translate(-100%,-100%);">1100</span>
<span class="t" style="left:47px;top:531.3px;font-size:12px;line-height:12px;color:#dedede;transform-origin:0 0;transform:rotate(-90deg) translate(-100%,-100%);">1200</span>
<span class="t" style="left:47px;top:628.3px;font-size:12px;line-height:12px;color:#dedede;transform-origin:0 0;transform:rotate(-90deg) translate(-100%,-100%);">1300</span>
<span class="t" style="left:47px;top:726.3px;font-size:12px;line-height:12px;color:#dedede;transform-origin:0 0;transform:rotate(-90deg) translate(-100%,-100%);">1400</span>
<span class="t" style="left:47px;top:823.3px;font-size:12px;line-height:12px;color:#dedede;transform-origin:0 0;transform:rotate(-90deg) translate(-100%,-100%);">1500</span>
<svg style="left:35.5px;top:97.5px;" width="13" height="14" viewBox="0 0 13 14"><rect x="0.5" y="6" width="9.5" height="7.5" rx="0.8" fill="#ececec"/><path d="M6.8 6.5 V4 Q6.8 1 9.6 1 Q12.4 1 12.4 4 V5" fill="none" stroke="#ececec" stroke-width="1.6"/></svg>
<div class="canvas" style="left:53px;top:116px;width:1375px;height:794px;background:#ffffff;overflow:hidden;"></div>
<div class="desk" style="left:53px;top:116px;width:107px;height:794px;background:#d1d1d1;"></div>
<div style="left:411px;top:108px;width:1017px;height:2px;background:#23589f;"></div>
<svg style="left:404.2px;top:103.4px;" width="11" height="11" viewBox="0 0 11 11"><circle cx="5.5" cy="5.5" r="2.8" fill="#212121" stroke="#23589f" stroke-width="1.7"/></svg>
<div style="left:45.2px;top:246.5px;width:2.2px;height:663.5px;background:#23589f;"></div>
<svg style="left:40.7px;top:240px;" width="11" height="11" viewBox="0 0 11 11"><circle cx="5.5" cy="5.5" r="2.8" fill="#212121" stroke="#23589f" stroke-width="1.7"/></svg>
<svg style="left:716.8px;top:111.8px;" width="10" height="5" viewBox="0 0 10 5"><path d="M0 0 H10 L5 4.4Z" fill="#ececec"/></svg>
<svg style="left:48.5px;top:366.5px;" width="5" height="9" viewBox="0 0 5 9"><path d="M0 0 V9 L4.5 4.5Z" fill="#ececec"/></svg>
<svg class="drawing" style="left:53px;top:116px;overflow:hidden;" width="1375" height="794" viewBox="53 116 1375 794" overflow="hidden"><path d="M501.5 284.5 H448.5 V337.5 M448.5 413.5 V466.5 H501.5 M577.5 466.5 H630.5 V413.5 M630.5 337.5 V284.5 H577.5 M758.5 284.5 H705.5 V337.5 M705.5 413.5 V466.5 H758.5 M834.5 466.5 H887.5 V413.5 M887.5 337.5 V284.5 H834.5 M1016.5 284.5 H963.5 V337.5 M963.5 413.5 V466.5 H1016.5 M1092.5 466.5 H1145.5 V413.5 M1145.5 337.5 V284.5 H1092.5 M1273.5 284.5 H1220.5 V337.5 M1220.5 413.5 V466.5 H1273.5 M1349.5 466.5 H1402.5 V413.5 M1402.5 337.5 V284.5 H1349.5 M1531.5 284.5 H1478.5 V337.5 M1478.5 413.5 V466.5 H1531.5 M1607.5 466.5 H1660.5 V413.5 M1660.5 337.5 V284.5 H1607.5 M501.5 541.5 H448.5 V595.5 M448.5 671.5 V724.5 H501.5 M577.5 724.5 H630.5 V671.5 M630.5 595.5 V541.5 H577.5 M758.5 541.5 H705.5 V595.5 M705.5 671.5 V724.5 H758.5 M834.5 724.5 H887.5 V671.5 M887.5 595.5 V541.5 H834.5 M1016.5 541.5 H963.5 V595.5 M963.5 671.5 V724.5 H1016.5 M1092.5 724.5 H1145.5 V671.5 M1145.5 595.5 V541.5 H1092.5 M1273.5 541.5 H1220.5 V595.5 M1220.5 671.5 V724.5 H1273.5 M1349.5 724.5 H1402.5 V671.5 M1402.5 595.5 V541.5 H1349.5 M1531.5 541.5 H1478.5 V595.5 M1478.5 671.5 V724.5 H1531.5 M1607.5 724.5 H1660.5 V671.5 M1660.5 595.5 V541.5 H1607.5" fill="none" stroke="#7474b0" stroke-width="1"/><path d="M501.5 284.5 H448.5 V337.5 M448.5 413.5 V466.5 H501.5 M577.5 466.5 H630.5 V413.5 M630.5 337.5 V284.5 H577.5 M758.5 284.5 H705.5 V337.5 M705.5 413.5 V466.5 H758.5 M834.5 466.5 H887.5 V413.5 M887.5 337.5 V284.5 H834.5 M1016.5 284.5 H963.5 V337.5 M963.5 413.5 V466.5 H1016.5 M1092.5 466.5 H1145.5 V413.5 M1145.5 337.5 V284.5 H1092.5 M1273.5 284.5 H1220.5 V337.5 M1220.5 413.5 V466.5 H1273.5 M1349.5 466.5 H1402.5 V413.5 M1402.5 337.5 V284.5 H1349.5 M1531.5 284.5 H1478.5 V337.5 M1478.5 413.5 V466.5 H1531.5 M1607.5 466.5 H1660.5 V413.5 M1660.5 337.5 V284.5 H1607.5 M501.5 541.5 H448.5 V595.5 M448.5 671.5 V724.5 H501.5 M577.5 724.5 H630.5 V671.5 M630.5 595.5 V541.5 H577.5 M758.5 541.5 H705.5 V595.5 M705.5 671.5 V724.5 H758.5 M834.5 724.5 H887.5 V671.5 M887.5 595.5 V541.5 H834.5 M1016.5 541.5 H963.5 V595.5 M963.5 671.5 V724.5 H1016.5 M1092.5 724.5 H1145.5 V671.5 M1145.5 595.5 V541.5 H1092.5 M1273.5 541.5 H1220.5 V595.5 M1220.5 671.5 V724.5 H1273.5 M1349.5 724.5 H1402.5 V671.5 M1402.5 595.5 V541.5 H1349.5 M1531.5 541.5 H1478.5 V595.5 M1478.5 671.5 V724.5 H1531.5 M1607.5 724.5 H1660.5 V671.5 M1660.5 595.5 V541.5 H1607.5" fill="none" stroke="#24246a" stroke-width="1.15" stroke-dasharray="6 1.3 1.6 1.3"/><path d="M501.5 284.5 V246.5 H577.5 V284.5 M539.5 246.5 V284.5 M501.5 284.5 H577.5 M448.5 337.5 H410.5 V413.5 H448.5 M410.5 375.5 H448.5 M448.5 337.5 V413.5 M630.5 337.5 H706.5 M630.5 413.5 H706.5 M630.5 375.5 H706.5 M668.5 337.5 V413.5 M630.5 337.5 V413.5 M706.5 337.5 V413.5 M501.5 466.5 V542.5 M577.5 466.5 V542.5 M539.5 466.5 V542.5 M501.5 504.5 H577.5 M501.5 466.5 H577.5 M501.5 542.5 H577.5 M758.5 284.5 V246.5 H834.5 V284.5 M796.5 246.5 V284.5 M758.5 284.5 H834.5 M887.5 337.5 H963.5 M887.5 413.5 H963.5 M887.5 375.5 H963.5 M925.5 337.5 V413.5 M887.5 337.5 V413.5 M963.5 337.5 V413.5 M758.5 466.5 V542.5 M834.5 466.5 V542.5 M796.5 466.5 V542.5 M758.5 504.5 H834.5 M758.5 466.5 H834.5 M758.5 542.5 H834.5 M1016.5 284.5 V246.5 H1092.5 V284.5 M1054.5 246.5 V284.5 M1016.5 284.5 H1092.5 M1145.5 337.5 H1221.5 M1145.5 413.5 H1221.5 M1145.5 375.5 H1221.5 M1183.5 337.5 V413.5 M1145.5 337.5 V413.5 M1221.5 337.5 V413.5 M1016.5 466.5 V542.5 M1092.5 466.5 V542.5 M1054.5 466.5 V542.5 M1016.5 504.5 H1092.5 M1016.5 466.5 H1092.5 M1016.5 542.5 H1092.5 M1273.5 284.5 V246.5 H1349.5 V284.5 M1311.5 246.5 V284.5 M1273.5 284.5 H1349.5 M1402.5 337.5 H1478.5 M1402.5 413.5 H1478.5 M1402.5 375.5 H1478.5 M1440.5 337.5 V413.5 M1402.5 337.5 V413.5 M1478.5 337.5 V413.5 M1273.5 466.5 V542.5 M1349.5 466.5 V542.5 M1311.5 466.5 V542.5 M1273.5 504.5 H1349.5 M1273.5 466.5 H1349.5 M1273.5 542.5 H1349.5 M1531.5 284.5 V246.5 H1607.5 V284.5 M1569.5 246.5 V284.5 M1531.5 284.5 H1607.5 M1660.5 337.5 H1736.5 M1660.5 413.5 H1736.5 M1660.5 375.5 H1736.5 M1698.5 337.5 V413.5 M1660.5 337.5 V413.5 M1736.5 337.5 V413.5 M1531.5 466.5 V542.5 M1607.5 466.5 V542.5 M1569.5 466.5 V542.5 M1531.5 504.5 H1607.5 M1531.5 466.5 H1607.5 M1531.5 542.5 H1607.5 M448.5 595.5 H410.5 V671.5 H448.5 M410.5 633.5 H448.5 M448.5 595.5 V671.5 M630.5 595.5 H706.5 M630.5 671.5 H706.5 M630.5 633.5 H706.5 M668.5 595.5 V671.5 M630.5 595.5 V671.5 M706.5 595.5 V671.5 M501.5 724.5 V762.5 H577.5 V724.5 M539.5 724.5 V762.5 M501.5 724.5 H577.5 M887.5 595.5 H963.5 M887.5 671.5 H963.5 M887.5 633.5 H963.5 M925.5 595.5 V671.5 M887.5 595.5 V671.5 M963.5 595.5 V671.5 M758.5 724.5 V762.5 H834.5 V724.5 M796.5 724.5 V762.5 M758.5 724.5 H834.5 M1145.5 595.5 H1221.5 M1145.5 671.5 H1221.5 M1145.5 633.5 H1221.5 M1183.5 595.5 V671.5 M1145.5 595.5 V671.5 M1221.5 595.5 V671.5 M1016.5 724.5 V762.5 H1092.5 V724.5 M1054.5 724.5 V762.5 M1016.5 724.5 H1092.5 M1402.5 595.5 H1478.5 M1402.5 671.5 H1478.5 M1402.5 633.5 H1478.5 M1440.5 595.5 V671.5 M1402.5 595.5 V671.5 M1478.5 595.5 V671.5 M1273.5 724.5 V762.5 H1349.5 V724.5 M1311.5 724.5 V762.5 M1273.5 724.5 H1349.5 M1660.5 595.5 H1736.5 M1660.5 671.5 H1736.5 M1660.5 633.5 H1736.5 M1698.5 595.5 V671.5 M1660.5 595.5 V671.5 M1736.5 595.5 V671.5 M1531.5 724.5 V762.5 H1607.5 V724.5 M1569.5 724.5 V762.5 M1531.5 724.5 H1607.5" fill="none" stroke="#3434a0" stroke-width="0.9" stroke-dasharray="5.8 3.9"/><path d="M501.5 284.5 L539.5 246.5 L577.5 284.5 M448.5 337.5 L410.5 375.5 L448.5 413.5 M630.5 337.5 L706.5 413.5 M630.5 413.5 L706.5 337.5 M501.5 466.5 L577.5 542.5 M577.5 466.5 L501.5 542.5 M758.5 284.5 L796.5 246.5 L834.5 284.5 M887.5 337.5 L963.5 413.5 M887.5 413.5 L963.5 337.5 M758.5 466.5 L834.5 542.5 M834.5 466.5 L758.5 542.5 M1016.5 284.5 L1054.5 246.5 L1092.5 284.5 M1145.5 337.5 L1221.5 413.5 M1145.5 413.5 L1221.5 337.5 M1016.5 466.5 L1092.5 542.5 M1092.5 466.5 L1016.5 542.5 M1273.5 284.5 L1311.5 246.5 L1349.5 284.5 M1402.5 337.5 L1478.5 413.5 M1402.5 413.5 L1478.5 337.5 M1273.5 466.5 L1349.5 542.5 M1349.5 466.5 L1273.5 542.5 M1531.5 284.5 L1569.5 246.5 L1607.5 284.5 M1660.5 337.5 L1736.5 413.5 M1660.5 413.5 L1736.5 337.5 M1531.5 466.5 L1607.5 542.5 M1607.5 466.5 L1531.5 542.5 M448.5 595.5 L410.5 633.5 L448.5 671.5 M630.5 595.5 L706.5 671.5 M630.5 671.5 L706.5 595.5 M501.5 724.5 L539.5 762.5 L577.5 724.5 M887.5 595.5 L963.5 671.5 M887.5 671.5 L963.5 595.5 M758.5 724.5 L796.5 762.5 L834.5 724.5 M1145.5 595.5 L1221.5 671.5 M1145.5 671.5 L1221.5 595.5 M1016.5 724.5 L1054.5 762.5 L1092.5 724.5 M1402.5 595.5 L1478.5 671.5 M1402.5 671.5 L1478.5 595.5 M1273.5 724.5 L1311.5 762.5 L1349.5 724.5 M1660.5 595.5 L1736.5 671.5 M1660.5 671.5 L1736.5 595.5 M1531.5 724.5 L1569.5 762.5 L1607.5 724.5" fill="none" stroke="#1c1c24" stroke-width="1.15"/><path d="M521.5 375.5 H557.5 M778.5 375.5 H814.5 M1036.5 375.5 H1072.5 M1293.5 375.5 H1329.5 M1551.5 375.5 H1587.5 M521.5 633.5 H557.5 M778.5 633.5 H814.5 M1036.5 633.5 H1072.5 M1293.5 633.5 H1329.5 M1551.5 633.5 H1587.5" fill="none" stroke="#9a9a9a" stroke-width="1"/></svg>
<svg style="left:396px;top:233px;" width="14" height="14" viewBox="0 0 14 14"><path d="M1 1 H6.5 L4.8 2.7 L11.3 9.2 L13 7.5 V13 H7.5 L9.2 11.3 L2.7 4.8 L1 6.5Z" fill="#000"/></svg>
<svg style="left:1194.3px;top:228.3px;" width="10" height="15" viewBox="0 0 10 15"><path d="M5 0 L9.6 4.8 H6.5 V10.2 H9.6 L5 15 L0.4 10.2 H3.5 V4.8 H0.4Z" fill="#000"/></svg>
<svg style="left:392px;top:835px;" width="16" height="11" viewBox="0 0 16 11"><path d="M0 5.5 L5 0.5 V3.8 H11 V0.5 L16 5.5 L11 10.5 V7.2 H5 V10.5Z" fill="#000"/></svg>
<div style="left:1428px;top:114px;width:22px;height:796px;background:#2f2f2f;"></div>
<div style="left:1434.5px;top:429px;width:8px;height:41.5px;background:#5e5e5e;border-radius:4px;"></div>
<div style="left:27px;top:910px;width:1401px;height:24px;background:#2f2f2f;"></div>
<div style="left:1428px;top:910px;width:22px;height:24px;background:#343434;"></div>
<div style="left:486.3px;top:916.8px;width:198px;height:8px;background:#5e5e5e;border-radius:4px;"></div>
<div style="left:0px;top:910px;width:27px;height:24px;background:#353535;"></div>
<svg style="left:1432px;top:97px;" width="15" height="12" viewBox="0 0 15 12"><rect x="0.8" y="0.8" width="13" height="8" rx="0.8" fill="none" stroke="#e8e8e8" stroke-width="1.4"/><path d="M5.5 9 H9 V10.5 H11 V11.6 H3.5 V10.5 H5.5Z" fill="#e8e8e8"/></svg>
<svg style="left:1436px;top:918px;" width="5" height="5" viewBox="0 0 5 5"><circle cx="2.5" cy="2.5" r="1.9" fill="#e8e8e8"/></svg>
<svg style="left:1454px;top:506px;" width="4" height="13" viewBox="0 0 4 13"><circle cx="2" cy="2" r="1.4" fill="#e6e6e6"/><circle cx="2" cy="6.5" r="1.4" fill="#e6e6e6"/><circle cx="2" cy="11" r="1.4" fill="#e6e6e6"/></svg>
<div class="docktabs" style="left:1463px;top:97px;width:405.5px;height:37.5px;background:#2e2e2e;"></div>
<div style="left:1534.8px;top:97px;width:157.5px;height:33px;background:#353535;"></div>
<div style="left:1463px;top:133.5px;width:405.5px;height:1px;background:#262626;"></div>
<div style="left:1534.8px;top:130px;width:157.5px;height:4.3px;background:#1c5cb0;"></div>
<svg style="left:1483.5px;top:108.5px;" width="16" height="14" viewBox="0 0 16 14"><path d="M4.5 0.5 H12 L9.5 3.5 H2Z" fill="#1d8fe0"/><path d="M5.8 5 H13.3 L10.8 8 H3.3Z" fill="#7cc4f2"/><path d="M7.3 9.7 H14.8 L12.3 12.8 H4.8Z" fill="#f0f0f0"/></svg>
<svg style="left:1546px;top:106.5px;" width="17" height="16" viewBox="0 0 17 16"><path d="M11 1 H1 V10" fill="none" stroke="#e6e6e6" stroke-width="1.4"/><path d="M15.5 2 L16.5 3.2 L8 12 L6.2 10.6Z" fill="#ececec"/><path d="M5.8 11 L7.6 12.6 Q5.5 15.6 1.8 15 Q4.2 13.6 5.8 11Z" fill="#1d8fe0"/></svg>
<span id="t35" class="t" style="left:1567.7px;top:109px;font-size:14.5px;line-height:14.5px;color:#9c9c9c;transform:scaleX(0.9882);">Fill and Stroke</span>
<svg style="left:1667.7px;top:111px;" width="9" height="9" viewBox="0 0 9 9"><path d="M1 1 L8 8 M8 1 L1 8" stroke="#d6d6d6" stroke-width="2"/></svg>
<div style="left:1839px;top:99px;width:29px;height:31px;background:#333333;border-radius:3px;"></div>
<svg style="left:1846.5px;top:111px;" width="13" height="8" viewBox="0 0 13 8"><path d="M1 1 L6.5 6.5 L12 1" fill="none" stroke="#c8c8c8" stroke-width="2"/></svg>
<div class="dockpanel" style="left:1463px;top:135px;width:405px;height:690px;background:#2f2f2f;border:1px solid #282828;"></div>
<div style="left:1464px;top:161.8px;width:403px;height:1px;background:#262626;"></div>
<div style="left:1479.5px;top:142.8px;width:13.3px;height:12.5px;background:#e9e9e9;border-radius:1px;"></div>
<span id="t36" class="t" style="left:1498.7px;top:144px;font-size:14.5px;line-height:14.5px;color:#7e7e7e;transform:scaleX(0.9368);">Fill</span>
<div style="left:1541px;top:143px;width:12.2px;height:12.2px;border:1px solid #e9e9e9;border-radius:1.5px;border-width:1.7px;"></div>
<span id="t37" class="t" style="left:1559.7px;top:144px;font-size:14.5px;line-height:14.5px;color:#7e7e7e;transform:scaleX(1.0182);">Stroke paint</span>
<svg style="left:1660.5px;top:142.5px;" width="15" height="14" viewBox="0 0 15 14"><path d="M0.5 2.8 H9" stroke="#1d8fe0" stroke-width="1.6"/><path d="M8 0 L13.5 2.8 L8 5.6Z" fill="#1d8fe0"/><path d="M1 7.8 H4.5 M6.5 7.8 H10" stroke="#f0f0f0" stroke-width="1.6"/><path d="M0.5 12 H13.8" stroke="#f0f0f0" stroke-width="1.8"/></svg>
<span id="t38" class="t" style="left:1680.6px;top:144px;font-size:14.5px;line-height:14.5px;color:#c4c4c4;transform:scaleX(0.9776);">Stroke style</span>
<div style="left:1653.2px;top:160.3px;width:109px;height:3.8px;background:#1c5cb0;"></div>
<span id="t39" class="t" style="left:1476.5px;top:183px;font-size:14.5px;line-height:14.5px;color:#9c9c9c;transform:scaleX(1.0341);">Width:</span>
<div style="left:1535.5px;top:171.5px;width:101.0px;height:33.80000000000001px;background:#303030;border:1px solid #272727;border-radius:6px;"></div>
<span id="t40" class="t" style="left:1544.3px;top:182px;font-size:14.5px;line-height:14.5px;color:#5c5c5c;transform:scaleX(0.9222);">1.000</span>
<div style="left:1603px;top:172.5px;width:1px;height:31.8px;background:#2a2a2a;"></div>
<div style="left:1619.5px;top:172.5px;width:1px;height:31.8px;background:#2a2a2a;"></div>
<svg style="left:1605.5px;top:182.8px;" width="11" height="11" viewBox="0 0 11 11"><path d="M0 5.5 H11" stroke="#484848" stroke-width="1.2"/></svg>
<svg style="left:1622.3px;top:182.8px;" width="11" height="11" viewBox="0 0 11 11"><path d="M0 5.5 H11 M5.5 0 V11" stroke="#484848" stroke-width="1.2"/></svg>
<div style="left:1641.5px;top:171.5px;width:90.90000000000009px;height:33.80000000000001px;background:#303030;border:1px solid #272727;border-radius:6px;"></div>
<span id="t41" class="t" style="left:1653.6px;top:183px;font-size:14.5px;line-height:14.5px;color:#b4b4b4;transform:scaleX(1.0429);">Hairline</span>
<svg style="left:1709.3px;top:185px;" width="12" height="7" viewBox="0 0 12 7"><path d="M0 0 H11.8 L5.9 6.6Z" fill="#b4b4b4"/></svg>
<span id="t42" class="t" style="left:1476.8px;top:221px;font-size:14.5px;line-height:14.5px;color:#9c9c9c;transform:scaleX(0.9302);">Dashes:</span>
<div style="left:1535.3px;top:210.5px;width:135.20000000000005px;height:32.80000000000001px;background:#303030;border:1px solid #272727;border-radius:6px;"></div>
<div style="left:1545px;top:225.6px;width:100px;height:2px;background:#adadad;"></div>
<svg style="left:1647.3px;top:224.2px;" width="12" height="6" viewBox="0 0 12 6"><path d="M0 0 H11.6 L5.8 5.8Z" fill="#6c6c6c"/></svg>
<div style="left:1675.6px;top:210.5px;width:73.90000000000009px;height:32.80000000000001px;background:#303030;border:1px solid #272727;border-radius:6px;"></div>
<span id="t43" class="t" style="left:1683.2px;top:221px;font-size:14.5px;line-height:14.5px;color:#5c5c5c;transform:scaleX(0.9571);">0.00</span>
<div style="left:1715.2px;top:211.5px;width:1px;height:30.8px;background:#2a2a2a;"></div>
<div style="left:1732.5px;top:211.5px;width:1px;height:30.8px;background:#2a2a2a;"></div>
<svg style="left:1718.6px;top:221.3px;" width="11" height="11" viewBox="0 0 11 11"><path d="M0 5.5 H11" stroke="#484848" stroke-width="1.2"/></svg>
<svg style="left:1735.4px;top:221.3px;" width="11" height="11" viewBox="0 0 11 11"><path d="M0 5.5 H11 M5.5 0 V11" stroke="#484848" stroke-width="1.2"/></svg>
<span id="t44" class="t" style="left:1476.8px;top:264px;font-size:14.5px;line-height:14.5px;color:#9c9c9c;transform:scaleX(0.9679);">Markers:</span>
<div style="left:1535.3px;top:248.5px;width:68.20000000000005px;height:42.80000000000001px;background:#303030;border:1px solid #272727;border-radius:6px;"></div>
<div style="left:1541.3px;top:269.8px;width:40px;height:1px;background:#424242;"></div>
<svg style="left:1584.3px;top:267.5px;" width="12" height="6" viewBox="0 0 12 6"><path d="M0 0 H11.4 L5.7 5.7Z" fill="#414141"/></svg>
<div style="left:1608.5px;top:248.5px;width:68.20000000000005px;height:42.80000000000001px;background:#303030;border:1px solid #272727;border-radius:6px;"></div>
<div style="left:1614.5px;top:269.8px;width:40px;height:1px;background:#424242;"></div>
<svg style="left:1657.5px;top:267.5px;" width="12" height="6" viewBox="0 0 12 6"><path d="M0 0 H11.4 L5.7 5.7Z" fill="#414141"/></svg>
<div style="left:1681.3px;top:248.5px;width:68.20000000000005px;height:42.80000000000001px;background:#303030;border:1px solid #272727;border-radius:6px;"></div>
<div style="left:1687.3px;top:269.8px;width:40px;height:1px;background:#424242;"></div>
<svg style="left:1730.3px;top:267.5px;" width="12" height="6" viewBox="0 0 12 6"><path d="M0 0 H11.4 L5.7 5.7Z" fill="#414141"/></svg>
<span id="t45" class="t" style="left:1476.8px;top:308px;font-size:14.5px;line-height:14.5px;color:#9c9c9c;transform:scaleX(0.9032);">Join:</span>
<div style="left:1535.3px;top:296.4px;width:35px;height:35px;background:#303030;border:1px solid #272727;border-radius:6px;"></div>
<svg style="left:1535.3px;top:296.4px;" width="35" height="35" viewBox="0 0 35 35"><path d="M7.4 27.4 V12.5 L12.3 6.6 H28.4 V21 H21.6 V27.4Z" fill="#8c8c8c"/><path d="M12.3 27.6 V12.1 H28.6 V16.6 H16.9 V27.6Z" fill="#303030"/><rect x="13.4" y="12.60" width="2.3" height="2.3" fill="#8c8c8c"/><rect x="13.4" y="15.65" width="2.3" height="2.3" fill="#8c8c8c"/><rect x="13.4" y="18.70" width="2.3" height="2.3" fill="#8c8c8c"/><rect x="13.4" y="21.75" width="2.3" height="2.3" fill="#8c8c8c"/><rect x="13.4" y="24.80" width="2.3" height="2.3" fill="#8c8c8c"/><rect x="16.50" y="12.6" width="2.3" height="2.3" fill="#8c8c8c"/><rect x="19.60" y="12.6" width="2.3" height="2.3" fill="#8c8c8c"/><rect x="22.70" y="12.6" width="2.3" height="2.3" fill="#8c8c8c"/><rect x="25.80" y="12.6" width="2.3" height="2.3" fill="#8c8c8c"/></svg>
<div style="left:1575.6px;top:296.4px;width:35px;height:35px;background:#214d8b;border:1px solid #1d4680;border-radius:6px;"></div>
<svg style="left:1575.6px;top:296.4px;" width="35" height="35" viewBox="0 0 35 35"><path d="M7.4 27.4 V13.6 Q7.4 6.6 14.4 6.6 H28.4 V21 H21.6 V27.4Z" fill="#8ea6cc"/><path d="M12.3 27.6 V12.1 H28.6 V16.6 H16.9 V27.6Z" fill="#214d8b"/><rect x="13.4" y="12.60" width="2.3" height="2.3" fill="#8ea6cc"/><rect x="13.4" y="15.65" width="2.3" height="2.3" fill="#8ea6cc"/><rect x="13.4" y="18.70" width="2.3" height="2.3" fill="#8ea6cc"/><rect x="13.4" y="21.75" width="2.3" height="2.3" fill="#8ea6cc"/><rect x="13.4" y="24.80" width="2.3" height="2.3" fill="#8ea6cc"/><rect x="16.50" y="12.6" width="2.3" height="2.3" fill="#8ea6cc"/><rect x="19.60" y="12.6" width="2.3" height="2.3" fill="#8ea6cc"/><rect x="22.70" y="12.6" width="2.3" height="2.3" fill="#8ea6cc"/><rect x="25.80" y="12.6" width="2.3" height="2.3" fill="#8ea6cc"/></svg>
<div style="left:1615.8px;top:296.4px;width:35px;height:35px;background:#303030;border:1px solid #272727;border-radius:6px;"></div>
<svg style="left:1615.8px;top:296.4px;" width="35" height="35" viewBox="0 0 35 35"><path d="M7.4 27.4 V6.6 H28.4 V21 H21.6 V27.4Z" fill="#8c8c8c"/><path d="M12.3 27.6 V12.1 H28.6 V16.6 H16.9 V27.6Z" fill="#303030"/><rect x="13.4" y="12.60" width="2.3" height="2.3" fill="#8c8c8c"/><rect x="13.4" y="15.65" width="2.3" height="2.3" fill="#8c8c8c"/><rect x="13.4" y="18.70" width="2.3" height="2.3" fill="#8c8c8c"/><rect x="13.4" y="21.75" width="2.3" height="2.3" fill="#8c8c8c"/><rect x="13.4" y="24.80" width="2.3" height="2.3" fill="#8c8c8c"/><rect x="16.50" y="12.6" width="2.3" height="2.3" fill="#8c8c8c"/><rect x="19.60" y="12.6" width="2.3" height="2.3" fill="#8c8c8c"/><rect x="22.70" y="12.6" width="2.3" height="2.3" fill="#8c8c8c"/><rect x="25.80" y="12.6" width="2.3" height="2.3" fill="#8c8c8c"/></svg>
<div style="left:1655.4px;top:296.4px;width:90.19999999999982px;height:34.900000000000034px;background:#303030;border:1px solid #272727;border-radius:6px;"></div>
<span id="t46" class="t" style="left:1664.3px;top:307px;font-size:14.5px;line-height:14.5px;color:#5c5c5c;transform:scaleX(0.9306);">10.00</span>
<div style="left:1711.5px;top:297.4px;width:1px;height:32.8px;background:#2a2a2a;"></div>
<div style="left:1728.6px;top:297.4px;width:1px;height:32.8px;background:#2a2a2a;"></div>
<svg style="left:1714.5px;top:308.3px;" width="11" height="11" viewBox="0 0 11 11"><path d="M0 5.5 H11" stroke="#484848" stroke-width="1.2"/></svg>
<svg style="left:1731.3px;top:308.3px;" width="11" height="11" viewBox="0 0 11 11"><path d="M0 5.5 H11 M5.5 0 V11" stroke="#484848" stroke-width="1.2"/></svg>
<span id="t47" class="t" style="left:1476.8px;top:348px;font-size:14.5px;line-height:14.5px;color:#9c9c9c;transform:scaleX(0.9032);">Cap:</span>
<div style="left:1535.3px;top:336.5px;width:35px;height:35px;background:#303030;border:1px solid #272727;border-radius:6px;"></div>
<svg style="left:1535.3px;top:336.5px;" width="35" height="35" viewBox="0 0 35 35"><rect x="9.6" y="13.6" width="4.8" height="13.9" fill="#8c8c8c"/><rect x="20.7" y="13.6" width="4.8" height="13.9" fill="#8c8c8c"/><rect x="16.25" y="13.70" width="2.3" height="2.3" fill="#8c8c8c"/><rect x="16.25" y="16.75" width="2.3" height="2.3" fill="#8c8c8c"/><rect x="16.25" y="19.80" width="2.3" height="2.3" fill="#8c8c8c"/><rect x="16.25" y="22.85" width="2.3" height="2.3" fill="#8c8c8c"/><rect x="16.25" y="25.90" width="2.3" height="2.3" fill="#8c8c8c"/></svg>
<div style="left:1575.6px;top:336.5px;width:35px;height:35px;background:#214d8b;border:1px solid #1d4680;border-radius:6px;"></div>
<svg style="left:1575.6px;top:336.5px;" width="35" height="35" viewBox="0 0 35 35"><path d="M9.2 27.5 V13.8 A8.05 8.05 0 0 1 25.3 13.8 V27.5Z" fill="#8ea6cc"/><rect x="14.9" y="12.5" width="4.8" height="15.2" fill="#214d8b"/><rect x="16.25" y="13.70" width="2.3" height="2.3" fill="#8ea6cc"/><rect x="16.25" y="16.75" width="2.3" height="2.3" fill="#8ea6cc"/><rect x="16.25" y="19.80" width="2.3" height="2.3" fill="#8ea6cc"/><rect x="16.25" y="22.85" width="2.3" height="2.3" fill="#8ea6cc"/><rect x="16.25" y="25.90" width="2.3" height="2.3" fill="#8ea6cc"/></svg>
<div style="left:1615.8px;top:336.5px;width:35px;height:35px;background:#303030;border:1px solid #272727;border-radius:6px;"></div>
<svg style="left:1615.8px;top:336.5px;" width="35" height="35" viewBox="0 0 35 35"><path d="M8.9 27.5 V8.7 H25.1 V27.5Z" fill="#8c8c8c"/><rect x="14.9" y="12.5" width="4.8" height="15.2" fill="#303030"/><rect x="16.25" y="13.70" width="2.3" height="2.3" fill="#8c8c8c"/><rect x="16.25" y="16.75" width="2.3" height="2.3" fill="#8c8c8c"/><rect x="16.25" y="19.80" width="2.3" height="2.3" fill="#8c8c8c"/><rect x="16.25" y="22.85" width="2.3" height="2.3" fill="#8c8c8c"/><rect x="16.25" y="25.90" width="2.3" height="2.3" fill="#8c8c8c"/></svg>
<span id="t48" class="t" style="left:1476.8px;top:388px;font-size:14.5px;line-height:14.5px;color:#9c9c9c;transform:scaleX(0.9780);">Order:</span>
<div style="left:1535.3px;top:376.6px;width:35px;height:35px;background:#214d8b;border:1px solid #1d4680;border-radius:6px;"></div>
<svg style="left:1535.3px;top:376.6px;" width="35" height="35" viewBox="0 0 35 35"><rect x="11.8" y="11.3" width="18.2" height="17.8" fill="#f0f0f0"/><rect x="17.8" y="17.8" width="12.2" height="11.3" fill="#ff1d8e"/><circle cx="14.4" cy="14.2" r="8.7" fill="#169fea"/></svg>
<div style="left:1575.6px;top:376.6px;width:35px;height:35px;background:#303030;border:1px solid #272727;border-radius:6px;"></div>
<svg style="left:1575.6px;top:376.6px;" width="35" height="35" viewBox="0 0 35 35"><rect x="11.8" y="11.3" width="18.2" height="17.8" fill="#f0f0f0"/><rect x="14.8" y="14.5" width="15.2" height="14.6" fill="#ff1d8e"/><circle cx="14.4" cy="14.2" r="8.7" fill="#169fea"/></svg>
<div style="left:1615.8px;top:376.6px;width:35px;height:35px;background:#303030;border:1px solid #272727;border-radius:6px;"></div>
<svg style="left:1615.8px;top:376.6px;" width="35" height="35" viewBox="0 0 35 35"><circle cx="14.4" cy="14.2" r="8.7" fill="#169fea"/><path d="M11.8 11.3 H30 V29.1 H11.8Z M17.8 17.8 V29.1 H30 V17.8Z" fill="#f0f0f0" fill-rule="evenodd"/><rect x="17.8" y="17.8" width="12.2" height="11.3" fill="#ff1d8e"/></svg>
<div style="left:1535.3px;top:416.7px;width:35px;height:35px;background:#303030;border:1px solid #272727;border-radius:6px;"></div>
<svg style="left:1535.3px;top:416.7px;" width="35" height="35" viewBox="0 0 35 35"><circle cx="14.4" cy="14.2" r="8.7" fill="#169fea"/><rect x="11.8" y="11.3" width="18.2" height="17.8" fill="#f0f0f0"/><rect x="17.8" y="17.8" width="12.2" height="11.3" fill="#ff1d8e"/></svg>
<div style="left:1575.6px;top:416.7px;width:35px;height:35px;background:#303030;border:1px solid #272727;border-radius:6px;"></div>
<svg style="left:1575.6px;top:416.7px;" width="35" height="35" viewBox="0 0 35 35"><circle cx="14.4" cy="14.2" r="8.7" fill="#169fea"/><rect x="11.8" y="11.3" width="18.2" height="17.8" fill="#f0f0f0"/><rect x="14.8" y="14.5" width="15.2" height="14.6" fill="#ff1d8e"/></svg>
<div style="left:1615.8px;top:416.7px;width:35px;height:35px;background:#303030;border:1px solid #272727;border-radius:6px;"></div>
<svg style="left:1615.8px;top:416.7px;" width="35" height="35" viewBox="0 0 35 35"><circle cx="14.4" cy="14.2" r="8.7" fill="#169fea"/><rect x="11.8" y="11.3" width="18.2" height="17.8" fill="#f0f0f0"/><rect x="14.5" y="14.2" width="15.5" height="14.9" fill="#ff1d8e"/></svg>
<div style="left:1463px;top:825px;width:405.5px;height:99px;background:#333333;"></div>
<span id="t49" class="t" style="left:1652.5px;top:838px;font-size:14.5px;line-height:14.5px;color:#8c8c8c;transform:scaleX(1.0309);">Blend mode:</span>
<div style="left:1740.5px;top:826.8px;width:124.79999999999995px;height:33.5px;background:#303030;border:1px solid #272727;border-radius:6px;"></div>
<span id="t50" class="t" style="left:1752px;top:838px;font-size:14.5px;line-height:14.5px;color:#7f7f7f;transform:scaleX(1.0532);">Normal</span>
<svg style="left:1841.5px;top:840px;" width="12" height="7" viewBox="0 0 12 7"><path d="M0 0 H11.6 L5.8 6.2Z" fill="#8c8c8c"/></svg>
<div style="left:1467.5px;top:864.5px;width:396px;height:26.5px;background:#303030;border:1px solid #272727;border-radius:3px;"></div>
<span id="t51" class="t" style="left:1472px;top:871px;font-size:14.5px;line-height:14.5px;color:#dcdcdc;transform:scaleX(0.9904);">Blur (%)</span>
<span id="t52" class="t" style="left:1794px;top:871px;font-size:14.5px;line-height:14.5px;color:#c9c9c9;transform:scaleX(0.9250);">0.0</span>
<div style="left:1786.5px;top:865.5px;width:1px;height:24.5px;background:#272727;"></div>
<svg style="left:1832.0px;top:872.0px;" width="12" height="12" viewBox="0 0 12 12"><path d="M0 6.0 H12" stroke="#4a4a4a" stroke-width="1.2"/></svg>
<svg style="left:1849.0px;top:872.0px;" width="12" height="12" viewBox="0 0 12 12"><path d="M0 6.0 H12 M6.0 0 V12" stroke="#b4b4b4" stroke-width="1.2"/></svg>
<div style="left:1467.5px;top:895.5px;width:396px;height:26.5px;background:#303030;border:1px solid #272727;border-radius:3px;"></div>
<div style="left:1468.5px;top:896.5px;width:317px;height:24.5px;background:#1a57a8;"></div>
<span id="t53" class="t" style="left:1472px;top:902px;font-size:14.5px;line-height:14.5px;color:#f4f4f4;transform:scaleX(1.0066);">Opacity (%)</span>
<span id="t54" class="t" style="left:1795px;top:902px;font-size:14.5px;line-height:14.5px;color:#c9c9c9;transform:scaleX(0.9250);">100.0</span>
<svg style="left:1832.0px;top:903.0px;" width="12" height="12" viewBox="0 0 12 12"><path d="M0 6.0 H12" stroke="#d0d0d0" stroke-width="1.2"/></svg>
<svg style="left:1849.0px;top:903.0px;" width="12" height="12" viewBox="0 0 12 12"><path d="M0 6.0 H12 M6.0 0 V12" stroke="#454545" stroke-width="1.2"/></svg>
<svg style="left:1886.5px;top:104.5px;" width="18" height="18" viewBox="0 0 18 18"><path d="M2 2 H9.5 L14.5 7 V16.5 H2Z" fill="none" stroke="#efefef" stroke-width="1.9" stroke-linejoin="miter"/><path d="M9.5 2 V7 H14.5" fill="none" stroke="#efefef" stroke-width="1.4"/><path d="M15.2 0 l0.9 1.9 l2 0.2 l-1.5 1.4 l0.4 2 l-1.8 -1 l-1.8 1 l0.4 -2 l-1.5 -1.4 l2 -0.2z" fill="#1fa01f"/></svg>
<svg style="left:1886.5px;top:142.0px;" width="18" height="18" viewBox="0 0 18 18"><path d="M1.5 15.5 V2.5 H7 L8.5 4.5 H14.5 V7" fill="none" stroke="#efefef" stroke-width="1.9"/><path d="M4.5 8 H17.5 L15 15.8 H1.5Z" fill="#efefef"/></svg>
<svg style="left:1886.5px;top:178.5px;" width="18" height="18" viewBox="0 0 18 18"><path d="M9 0.5 V7" stroke="#1fa01f" stroke-width="2.6"/><path d="M4.8 5.5 H13.2 L9 10Z" fill="#1fa01f"/><path d="M4.5 8.5 L1.8 12 V17 H16.2 V12 L13.5 8.5" fill="none" stroke="#efefef" stroke-width="1.7"/><path d="M1.8 12 H16.2 V17 H1.8Z" fill="#efefef"/><rect x="5.5" y="13.3" width="7" height="1.6" fill="#353535"/></svg>
<svg style="left:1886.5px;top:214.5px;" width="18" height="18" viewBox="0 0 18 18"><rect x="4.3" y="1.8" width="9.4" height="3" fill="#bdbdbd"/><rect x="1.5" y="5.8" width="15" height="6.4" rx="1" fill="#bdbdbd"/><rect x="4.6" y="9.6" width="8.8" height="6.6" fill="#efefef" stroke="#353535" stroke-width="1"/></svg>
<div style="left:1880px;top:244px;width:32px;height:1px;background:#3c3c3c;"></div>
<svg style="left:1886.5px;top:255.5px;" width="18" height="18" viewBox="0 0 18 18"><path d="M5.5 6 V1.5 H10.5 L14.5 5.5 V16.5 H5.5 V13" fill="none" stroke="#efefef" stroke-width="1.9"/><path d="M0.5 9.5 H7" stroke="#1fa01f" stroke-width="2.4"/><path d="M6 5.8 L10.5 9.5 L6 13.2Z" fill="#1fa01f"/></svg>
<svg style="left:1886.5px;top:293.0px;" width="18" height="18" viewBox="0 0 18 18"><path d="M12.5 7.5 V5.5 L8.5 1.5 H2.5 V16.5 H12.5 V13.5" fill="none" stroke="#efefef" stroke-width="1.9"/><path d="M7.5 10.5 H14" stroke="#1fa01f" stroke-width="2.4"/><path d="M13 6.8 L17.5 10.5 L13 14.2Z" fill="#1fa01f"/></svg>
<div style="left:1880px;top:323px;width:32px;height:1px;background:#3c3c3c;"></div>
<svg style="left:1886.5px;top:334.0px;" width="18" height="18" viewBox="0 0 18 18"><path d="M5.5 6 H11.5 Q15.5 6 15.5 10 Q15.5 13.5 11.5 13.5 H10" fill="none" stroke="#efefef" stroke-width="2.1"/><path d="M7 1.8 L1.8 6 L7 10.2Z" fill="#efefef"/></svg>
<svg style="left:1886.5px;top:371.0px;" width="18" height="18" viewBox="0 0 18 18"><path d="M12.5 6 H6.5 Q2.5 6 2.5 10 Q2.5 13.5 6.5 13.5 H8" fill="none" stroke="#6e6e6e" stroke-width="2.1"/><path d="M11 1.8 L16.2 6 L11 10.2Z" fill="#6e6e6e"/></svg>
<div style="left:1880px;top:400px;width:32px;height:1px;background:#3c3c3c;"></div>
<svg style="left:1886.5px;top:412.0px;" width="18" height="18" viewBox="0 0 18 18"><rect x="1" y="1" width="10.5" height="10.5" fill="#efefef"/><rect x="5.5" y="5.5" width="12" height="12" fill="#efefef" stroke="#353535" stroke-width="1.4"/></svg>
<svg style="left:1886.5px;top:449.5px;" width="18" height="18" viewBox="0 0 18 18"><path d="M3 0.8 L12.5 12 M15 0.8 L5.5 12" stroke="#efefef" stroke-width="2" fill="none"/><circle cx="4.3" cy="13.8" r="2.7" fill="none" stroke="#efefef" stroke-width="1.8"/><circle cx="13.7" cy="13.8" r="2.7" fill="none" stroke="#efefef" stroke-width="1.8"/></svg>
<svg style="left:1886.5px;top:486.5px;" width="18" height="18" viewBox="0 0 18 18"><rect x="2" y="3" width="14" height="14" fill="none" stroke="#efefef" stroke-width="1.5"/><rect x="5.8" y="0.8" width="6.4" height="3.6" fill="#efefef"/><path d="M4.6 5.8 H13.4 V12 L11 14.8 H4.6Z" fill="#efefef"/></svg>
<div style="left:1880px;top:515px;width:32px;height:1px;background:#3c3c3c;"></div>
<div style="left:1878.2px;top:519.5px;width:35.2px;height:33.8px;background:#333333;border:1px solid #272727;border-radius:6px;"></div>
<svg style="left:1890px;top:533.6px;" width="12" height="7" viewBox="0 0 12 7"><path d="M0 0 H11.6 L5.8 6.2Z" fill="#f2f2f2"/></svg>
<div class="palette" style="left:0px;top:934px;width:1918px;height:33px;background:#353535;"></div>
<div class="palrow" style="left:0;top:934px;width:1860px;height:16px;"><i style="left:137px;width:21px;background:#1a1a1a"></i><i style="left:159px;width:21px;background:#333333"></i><i style="left:181px;width:21px;background:#4d4d4d"></i><i style="left:203px;width:21px;background:#666666"></i><i style="left:225px;width:21px;background:#999999"></i><i style="left:247px;width:21px;background:#b3b3b3"></i><i style="left:269px;width:21px;background:#cccccc"></i><i style="left:291px;width:21px;background:#e6e6e6"></i><i style="left:313px;width:21px;background:#ececec"></i><i style="left:335px;width:21px;background:#f2f2f2"></i><i style="left:357px;width:21px;background:#f9f9f9"></i><i style="left:379px;width:21px;background:#800000"></i><i style="left:401px;width:21px;background:#ff0000"></i><i style="left:423px;width:21px;background:#808000"></i><i style="left:445px;width:21px;background:#ffff00"></i><i style="left:467px;width:20px;background:#008000"></i><i style="left:488px;width:20px;background:#00ff00"></i><i style="left:509px;width:20px;background:#008080"></i><i style="left:530px;width:20px;background:#00ffff"></i><i style="left:551px;width:20px;background:#000080"></i><i style="left:572px;width:20px;background:#0000ff"></i><i style="left:593px;width:20px;background:#800080"></i><i style="left:614px;width:20px;background:#ff00ff"></i><i style="left:635px;width:20px;background:#2b0000"></i><i style="left:656px;width:20px;background:#550000"></i><i style="left:677px;width:20px;background:#800000"></i><i style="left:698px;width:20px;background:#aa0000"></i><i style="left:719px;width:20px;background:#d40000"></i><i style="left:740px;width:20px;background:#ff0000"></i><i style="left:761px;width:20px;background:#ff2a2a"></i><i style="left:782px;width:20px;background:#ff5555"></i><i style="left:803px;width:20px;background:#ff8080"></i><i style="left:824px;width:20px;background:#ffaaaa"></i><i style="left:845px;width:20px;background:#ffd5d5"></i><i style="left:866px;width:20px;background:#280b0b"></i><i style="left:887px;width:20px;background:#501616"></i><i style="left:908px;width:20px;background:#782121"></i><i style="left:929px;width:20px;background:#a02c2c"></i><i style="left:950px;width:20px;background:#c83737"></i><i style="left:971px;width:20px;background:#d35f5f"></i><i style="left:992px;width:20px;background:#de8787"></i><i style="left:1013px;width:20px;background:#e9afaf"></i><i style="left:1034px;width:20px;background:#f4d7d7"></i><i style="left:1055px;width:20px;background:#241c1c"></i><i style="left:1076px;width:20px;background:#483737"></i><i style="left:1097px;width:20px;background:#6c5353"></i><i style="left:1118px;width:20px;background:#916f6f"></i><i style="left:1139px;width:20px;background:#ac9393"></i><i style="left:1160px;width:20px;background:#c8b7b7"></i><i style="left:1181px;width:20px;background:#e3dbdb"></i><i style="left:1202px;width:20px;background:#2b1100"></i><i style="left:1223px;width:20px;background:#552200"></i><i style="left:1244px;width:20px;background:#803300"></i><i style="left:1265px;width:20px;background:#aa4400"></i><i style="left:1286px;width:20px;background:#d45500"></i><i style="left:1307px;width:20px;background:#ff6600"></i><i style="left:1328px;width:20px;background:#ff7f2a"></i><i style="left:1349px;width:20px;background:#ff9955"></i><i style="left:1370px;width:20px;background:#ffb380"></i><i style="left:1391px;width:20px;background:#ffccaa"></i><i style="left:1412px;width:20px;background:#ffe6d5"></i><i style="left:1433px;width:20px;background:#28170b"></i><i style="left:1454px;width:20px;background:#502d16"></i><i style="left:1475px;width:20px;background:#784421"></i><i style="left:1496px;width:20px;background:#a05a2c"></i><i style="left:1517px;width:20px;background:#c87137"></i><i style="left:1538px;width:20px;background:#d38d5f"></i><i style="left:1559px;width:20px;background:#deaa87"></i><i style="left:1580px;width:20px;background:#e9c6af"></i><i style="left:1601px;width:20px;background:#f4e3d7"></i><i style="left:1622px;width:20px;background:#241f1c"></i><i style="left:1643px;width:20px;background:#483e37"></i><i style="left:1664px;width:20px;background:#6c5d53"></i><i style="left:1685px;width:20px;background:#917c6f"></i><i style="left:1706px;width:20px;background:#ac9d93"></i><i style="left:1727px;width:20px;background:#c8beb7"></i><i style="left:1748px;width:20px;background:#e3dedb"></i><i style="left:1769px;width:20px;background:#2b2200"></i><i style="left:1790px;width:20px;background:#554400"></i><i style="left:1811px;width:20px;background:#806600"></i><i style="left:1832px;width:20px;background:#aa8800"></i></div>
<div class="palrow" style="left:0;top:951px;width:1860px;height:16px;"><i style="left:137px;width:21px;background:#d4aa00"></i><i style="left:159px;width:21px;background:#ffcc00"></i><i style="left:181px;width:21px;background:#ffd42a"></i><i style="left:203px;width:21px;background:#ffdd55"></i><i style="left:225px;width:21px;background:#ffe680"></i><i style="left:247px;width:21px;background:#ffeeaa"></i><i style="left:269px;width:21px;background:#fff6d5"></i><i style="left:291px;width:21px;background:#28220b"></i><i style="left:313px;width:21px;background:#504416"></i><i style="left:335px;width:21px;background:#786721"></i><i style="left:357px;width:21px;background:#a0892c"></i><i style="left:379px;width:21px;background:#c8ab37"></i><i style="left:401px;width:21px;background:#d3bc5f"></i><i style="left:423px;width:21px;background:#decd87"></i><i style="left:445px;width:21px;background:#e9ddaf"></i><i style="left:467px;width:20px;background:#f4eed7"></i><i style="left:488px;width:20px;background:#24221c"></i><i style="left:509px;width:20px;background:#484537"></i><i style="left:530px;width:20px;background:#6c6753"></i><i style="left:551px;width:20px;background:#918a6f"></i><i style="left:572px;width:20px;background:#aca793"></i><i style="left:593px;width:20px;background:#c8c4b7"></i><i style="left:614px;width:20px;background:#e3e2db"></i><i style="left:635px;width:20px;background:#222b00"></i><i style="left:656px;width:20px;background:#445500"></i><i style="left:677px;width:20px;background:#668000"></i><i style="left:698px;width:20px;background:#88aa00"></i><i style="left:719px;width:20px;background:#aad400"></i><i style="left:740px;width:20px;background:#ccff00"></i><i style="left:761px;width:20px;background:#d4ff2a"></i><i style="left:782px;width:20px;background:#ddff55"></i><i style="left:803px;width:20px;background:#e5ff80"></i><i style="left:824px;width:20px;background:#eeffaa"></i><i style="left:845px;width:20px;background:#f6ffd5"></i><i style="left:866px;width:20px;background:#22280b"></i><i style="left:887px;width:20px;background:#445016"></i><i style="left:908px;width:20px;background:#667821"></i><i style="left:929px;width:20px;background:#89a02c"></i><i style="left:950px;width:20px;background:#abc837"></i><i style="left:971px;width:20px;background:#bcd35f"></i><i style="left:992px;width:20px;background:#cdde87"></i><i style="left:1013px;width:20px;background:#dde9af"></i><i style="left:1034px;width:20px;background:#eef4d7"></i><i style="left:1055px;width:20px;background:#22241c"></i><i style="left:1076px;width:20px;background:#454837"></i><i style="left:1097px;width:20px;background:#676c53"></i><i style="left:1118px;width:20px;background:#8a916f"></i><i style="left:1139px;width:20px;background:#a7ac93"></i><i style="left:1160px;width:20px;background:#c4c8b7"></i><i style="left:1181px;width:20px;background:#e2e3db"></i><i style="left:1202px;width:20px;background:#112b00"></i><i style="left:1223px;width:20px;background:#225500"></i><i style="left:1244px;width:20px;background:#338000"></i><i style="left:1265px;width:20px;background:#44aa00"></i><i style="left:1286px;width:20px;background:#55d400"></i><i style="left:1307px;width:20px;background:#66ff00"></i><i style="left:1328px;width:20px;background:#7fff2a"></i><i style="left:1349px;width:20px;background:#99ff55"></i><i style="left:1370px;width:20px;background:#b3ff80"></i><i style="left:1391px;width:20px;background:#ccffaa"></i><i style="left:1412px;width:20px;background:#e6ffd5"></i><i style="left:1433px;width:20px;background:#17280b"></i><i style="left:1454px;width:20px;background:#2d5016"></i><i style="left:1475px;width:20px;background:#447821"></i><i style="left:1496px;width:20px;background:#5aa02c"></i><i style="left:1517px;width:20px;background:#71c837"></i><i style="left:1538px;width:20px;background:#8dd35f"></i><i style="left:1559px;width:20px;background:#aade87"></i><i style="left:1580px;width:20px;background:#c6e9af"></i><i style="left:1601px;width:20px;background:#e3f4d7"></i><i style="left:1622px;width:20px;background:#1f241c"></i><i style="left:1643px;width:20px;background:#3e4837"></i><i style="left:1664px;width:20px;background:#5d6c53"></i><i style="left:1685px;width:20px;background:#7c916f"></i><i style="left:1706px;width:20px;background:#9dac93"></i><i style="left:1727px;width:20px;background:#bec8b7"></i><i style="left:1748px;width:20px;background:#dee3db"></i><i style="left:1769px;width:20px;background:#002b00"></i><i style="left:1790px;width:20px;background:#005500"></i><i style="left:1811px;width:20px;background:#008000"></i><i style="left:1832px;width:20px;background:#00aa00"></i></div>
<div style="left:1px;top:934px;width:33px;height:33px;background:#ffffff;"></div>
<svg style="left:1px;top:934px;" width="33" height="33" viewBox="0 0 33 33"><circle cx="16.5" cy="16.5" r="4.6" fill="#b4b4b4"/><path d="M1.5 2 L31.5 31 M31.5 2 L1.5 31" stroke="#bd2a35" stroke-width="2.3"/></svg>
<div style="left:35px;top:934px;width:33px;height:33px;background:#000000;"></div>
<svg style="left:35px;top:934px;" width="33" height="33" viewBox="0 0 33 33"><circle cx="16.5" cy="16.5" r="9.5" fill="none" stroke="#c9c9c9" stroke-width="1.8"/></svg>
<div style="left:69px;top:934px;width:33px;height:33px;background:#808080;"></div>
<div style="left:103px;top:934px;width:33px;height:33px;background:#ffffff;"></div>
<svg style="left:1858.5px;top:947px;" width="12" height="7" viewBox="0 0 12 7"><path d="M1 6 L6 1 L11 6" fill="none" stroke="#6c6c6c" stroke-width="1.8"/></svg>
<svg style="left:1881px;top:946px;" width="12" height="7" viewBox="0 0 12 7"><path d="M1 1 L6 6 L11 1" fill="none" stroke="#f0f0f0" stroke-width="1.8"/></svg>
<svg style="left:1902px;top:948px;" width="16" height="13" viewBox="0 0 16 13"><path d="M0 1.5 H16 M0 6.3 H16 M0 11.1 H16" stroke="#f0f0f0" stroke-width="1.7"/></svg>
<div class="statusbar" style="left:0px;top:967px;width:1918px;height:24px;background:#353535;"></div>
<span id="t55" class="t" style="left:22px;top:974px;font-size:13.5px;line-height:13.5px;color:#8f8f8f;transform:scaleX(1.0238);">Fill:</span>
<span id="t56" class="t" style="left:48px;top:974px;font-size:13.5px;line-height:13.5px;color:#a8a8a8;font-weight:bold;transform:scaleX(1.1250);">m</span>
<span id="t57" class="t" style="left:75px;top:974px;font-size:13.5px;line-height:13.5px;color:#8f8f8f;font-style:italic;transform:scaleX(1.0312);">None</span>
<div style="left:68px;top:989.5px;width:47px;height:3px;background:#000;border-radius:1px;"></div>
<span id="t58" class="t" style="left:177.7px;top:984px;font-size:14.5px;line-height:14.5px;color:#8f8f8f;transform:scaleX(0.8200);">O:</span>
<div style="left:196.5px;top:969.5px;width:72px;height:30px;background:#303030;border:1px solid #272727;border-radius:6px;"></div>
<span id="t59" class="t" style="left:204.8px;top:984px;font-size:14.5px;line-height:14.5px;color:#cfcfcf;transform:scaleX(0.9583);">100</span>
<div style="left:234.7px;top:970.5px;width:1px;height:25px;background:#2a2a2a;"></div>
<div style="left:251.8px;top:970.5px;width:1px;height:25px;background:#2a2a2a;"></div>
<div style="left:237px;top:988.5px;width:11.6px;height:2px;background:#d8d8d8;"></div>
<div style="left:260.5px;top:985px;width:1.3px;height:8px;background:#4a4a4a;"></div>
<div style="left:257px;top:989px;width:8.3px;height:1.3px;background:#4a4a4a;"></div>
<div style="left:279.5px;top:979px;width:3.2px;height:14px;background:#c4c4c4;"></div>
<span id="t60" class="t" style="left:289.7px;top:984px;font-size:14.5px;line-height:14.5px;color:#8f8f8f;transform:scaleX(0.9500);">0</span>
<svg style="left:317.5px;top:983.5px;" width="16" height="16" viewBox="0 0 16 16"><g transform="translate(8 8)" fill="none" stroke="#ececec"><circle r="4.6" stroke-width="1.8"/><g stroke-width="2.2"><path d="M0 -5 V-8"/><path d="M0 -5 V-8" transform="rotate(45)"/><path d="M0 -5 V-8" transform="rotate(-45)"/><path d="M0 -5 V-8" transform="rotate(90)"/><path d="M0 -5 V-8" transform="rotate(-90)"/></g></g></svg>
<svg style="left:356px;top:984px;" width="14" height="14" viewBox="0 0 14 14"><path d="M6.8 7.5 V4 Q6.8 1 9.6 1 Q12.4 1 12.4 4 V5" fill="none" stroke="#ececec" stroke-width="1.7"/><rect x="0.5" y="6" width="9.5" height="8" fill="#ececec"/></svg>
<div style="left:379px;top:972px;width:1px;height:19px;background:#2e2e2e;"></div>
<span class="t" id="stmsg" style="left:387.3px;top:984px;font-size:14.5px;line-height:14.5px;color:#8f8f8f;transform:scaleX(1.0346);"><b>384</b> objects selected of type <b>Path</b> in layer <b>0</b>. Click selection again to toggle scale/rotation handles.</span>
<svg style="left:1466px;top:984.5px;" width="7" height="12" viewBox="0 0 7 12"><path d="M6.5 0 V12 L0.5 6Z" fill="#585858"/></svg>
<div style="left:1487.3px;top:970px;width:62.3px;height:30px;background:#303030;border:1px solid #272727;border-radius:6px;"></div>
<span id="t61" class="t" style="left:1499px;top:986px;font-size:14.5px;line-height:14.5px;color:#6c6c6c;transform:scaleX(0.9167);">1. 1</span>
<svg style="left:1526px;top:986.5px;" width="12" height="7" viewBox="0 0 12 7"><path d="M0 0 H11.6 L5.8 6.2Z" fill="#8c8c8c"/></svg>
<svg style="left:1564.5px;top:984.5px;" width="7" height="12" viewBox="0 0 7 12"><path d="M0.5 0 V12 L6.5 6Z" fill="#585858"/></svg>
<span id="t62" class="t" style="left:1593px;top:974px;font-size:14.5px;line-height:14.5px;color:#8f8f8f;transform:scaleX(0.8571);">X:</span>
<span id="t63" class="t" style="left:1623.6px;top:974px;font-size:14.5px;line-height:14.5px;color:#8f8f8f;transform:scaleX(0.9636);">578.58</span>
<span id="t64" class="t" style="left:1679px;top:984px;font-size:14.5px;line-height:14.5px;color:#8f8f8f;transform:scaleX(0.8462);">Z:</span>
<div style="left:1694px;top:970px;width:90.6px;height:30px;background:#303030;border:1px solid #272727;border-radius:6px;"></div>
<span id="t65" class="t" style="left:1710.4px;top:984px;font-size:14.5px;line-height:14.5px;color:#cfcfcf;transform:scaleX(0.9000);">97%</span>
<div style="left:1750px;top:971px;width:1px;height:25px;background:#2a2a2a;"></div>
<div style="left:1767px;top:971px;width:1px;height:25px;background:#2a2a2a;"></div>
<div style="left:1752.7px;top:988.3px;width:9.5px;height:2.2px;background:#d8d8d8;"></div>
<div style="left:1770px;top:988.3px;width:11px;height:2.2px;background:#d8d8d8;"></div>
<div style="left:1774.4px;top:984px;width:2.2px;height:8px;background:#d8d8d8;"></div>
<span id="t66" class="t" style="left:1795px;top:984px;font-size:14.5px;line-height:14.5px;color:#8f8f8f;transform:scaleX(0.7333);">R:</span>
<div style="left:1810.8px;top:970px;width:99px;height:30px;background:#303030;border:1px solid #272727;border-radius:6px;"></div>
<span id="t67" class="t" style="left:1831px;top:984px;font-size:14.5px;line-height:14.5px;color:#cfcfcf;transform:scaleX(0.9588);">0.00°</span>
<div style="left:1881px;top:988.3px;width:10px;height:2.2px;background:#d8d8d8;"></div>
<div style="left:1897px;top:988.3px;width:10.5px;height:2.2px;background:#d8d8d8;"></div>
<div style="left:1901.2px;top:984px;width:2.2px;height:8px;background:#d8d8d8;"></div>
</div></body></html>
